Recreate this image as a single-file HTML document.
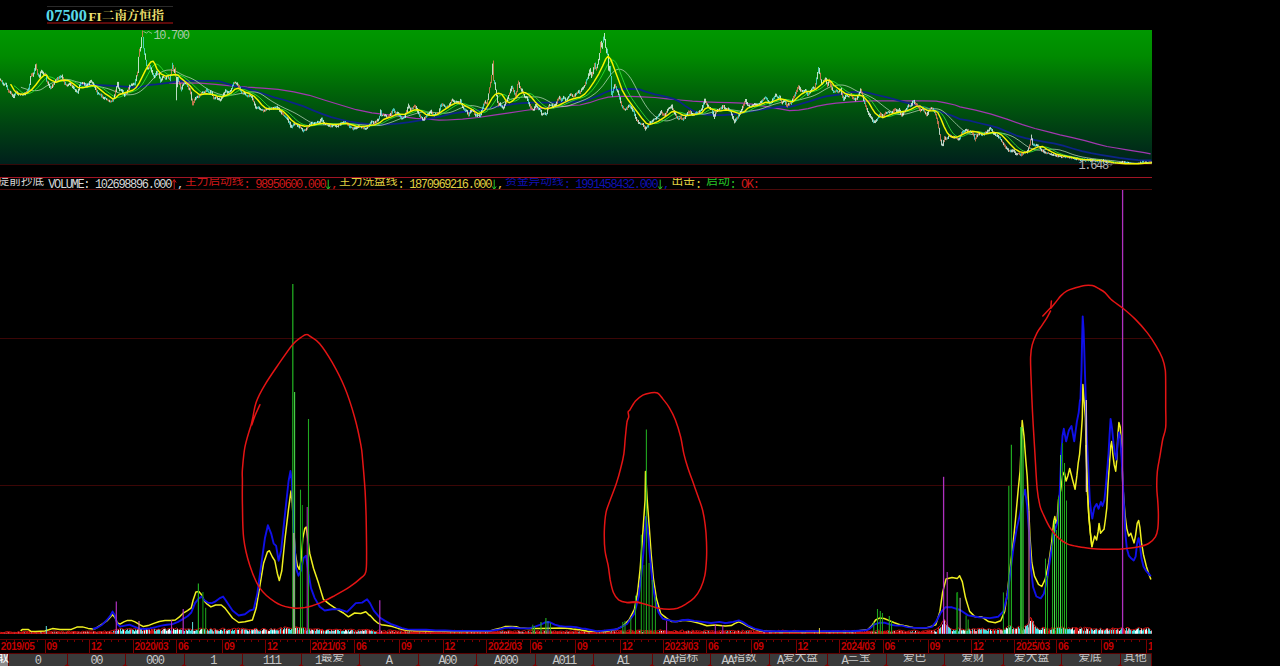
<!DOCTYPE html>
<html lang="zh"><head><meta charset="utf-8"><title>07500 FI二南方恒指</title>
<style>
html,body{margin:0;padding:0;background:#000}
body{width:1280px;height:666px;overflow:hidden;position:relative;font-family:"Liberation Sans",sans-serif;color:#c0c0c0}
.cj{display:inline-block;vertical-align:top;overflow:visible;white-space:nowrap;font-family:"Liberation Mono","Noto Sans CJK SC",monospace;font-size:11.7px;line-height:11.7px;letter-spacing:0;font-weight:normal}
#title{position:absolute;left:47px;top:6px;width:126px;height:18px;border-top:1px solid #2a2a2a;border-bottom:2px solid #5c0a0a;box-sizing:border-box;white-space:nowrap}
#title .code{position:absolute;left:-1px;top:-1px;font:bold 17px/20px "Liberation Serif",serif;color:#58d8e8;transform:scaleX(.965);transform-origin:0 0}
#title .fi{position:absolute;left:41.5px;top:2px;font:bold 13px/16px "Liberation Serif",serif;color:#f0e070;transform-origin:0 0}
#title .nm{position:absolute;left:55px;top:2.7px;color:#f0e070}
#title .nm .cj{font:bold 12.4px/12.6px "Liberation Serif","Noto Serif CJK SC",serif;width:62px;height:12.6px}
#kpanel{position:absolute;left:0;top:30px;width:1152px;height:134px;border-bottom:1px solid #340909;background:linear-gradient(#009800 0%,#008a00 20%,#006608 45%,#004412 70%,#002e18 88%,#00201c 100%)}
#chart{position:absolute;left:0;top:0}
#ind{position:absolute;left:0;top:177px;width:1152px;height:13px;box-sizing:border-box;border-top:1px solid #a01424;border-bottom:1px solid #4a0a0a;white-space:nowrap;overflow:hidden}
#ind .r{position:absolute;top:0;height:11px;font:12px/15px "Liberation Mono",monospace;letter-spacing:-1.35px}
#ind .cj{margin-top:-0.7px}
#ind .ar{display:inline-block;vertical-align:top;width:5.85px;height:11px;margin-top:0.5px}
.cw{color:#d8d8d8}.cr{color:#d01818}.cy{color:#e0d040}.cb{color:#1010b4}.cg{color:#28c828}
#axis{position:absolute;left:0;top:639px;width:1152px;height:15px;box-sizing:border-box;border-top:1px solid #5a0000;border-bottom:1px solid #5a0000;overflow:hidden}
#axis .m{position:absolute;top:0;height:14px;border-left:1px solid #7a0000;padding-left:1px;font:bold 10px/14px "Liberation Sans",sans-serif;color:#c40000;letter-spacing:-0.35px;white-space:nowrap}
#axis .t{position:absolute;top:0;width:1px;height:2px;background:#7a0000}
#tabs{position:absolute;left:0;top:654px;width:1152px;height:12px;background:#3a3a3a;overflow:hidden}
#tabs .tb{position:absolute;top:0;height:13px;text-align:center;font:12px/14px "Liberation Mono",monospace;letter-spacing:-1.35px;color:#c8c8c8;box-sizing:border-box;border-right:1px solid #6a0000;white-space:nowrap}
#tabs .tb .cj{margin-top:-0.8px;margin-right:1.35px}
#tabs .tb i{position:absolute;right:-4px;bottom:0;width:0;height:0;border-left:4px solid transparent;border-right:4px solid transparent;border-bottom:3px solid #800000}
#tabs .first{background:#8a8a8a;color:#fff}
#tabs .first .cj{font-size:12px;line-height:12px;width:12px;height:12px}
</style></head>
<body>
<div id="title"><span class="code">07500</span><span class="fi">FI</span><span class="nm"><span class="cj">二南方恒指</span></span></div>
<div id="kpanel"></div>
<svg id="chart" width="1280" height="666" viewBox="0 0 1280 666" fill="none">
<polyline points="168.8,83.1 184.4,82.8 200.0,83.1 215.6,84.4 231.2,85.9 246.9,87.2 262.5,88.1 278.1,89.4 293.8,91.9 309.4,95.3 325.0,100.3 340.6,105.0 356.2,109.7 371.9,112.8 384.4,114.4 392.2,115.3 400.0,116.4 415.6,118.3 431.2,119.5 439.1,120.2 446.9,120.0 462.5,119.1 478.1,117.5 493.8,115.2 509.4,112.8 525.0,110.5 540.6,108.4 556.2,107.3 571.9,105.3 580.0,105.0 589.4,102.7 598.8,99.5 608.1,97.2 617.5,96.4 630.0,96.4 642.5,96.9 655.0,97.5 667.5,98.8 680.0,100.0 692.5,101.1 705.0,101.9 717.5,102.3 730.0,102.7 742.5,103.1 751.9,104.2 761.2,105.8 770.6,107.3 780.0,108.9 789.4,110.6 798.8,110.2 808.1,108.6 817.5,106.2 826.9,104.4 836.2,103.1 845.6,102.3 855.0,101.6 864.4,101.1 873.8,100.8 886.2,100.8 898.8,100.8 911.2,100.8 923.8,100.8 936.2,101.1 945.6,102.8 955.0,105.0 960.0,106.9 975.6,110.1 991.2,114.1 1006.9,119.1 1022.5,124.6 1035.0,128.5 1047.5,131.6 1060.0,134.8 1072.5,137.6 1085.0,140.7 1097.5,144.1 1106.9,146.5 1116.2,148.0 1125.6,149.6 1135.0,151.2 1144.4,152.7 1150.6,153.8" stroke="#a038b0" stroke-width="1.2" />
<polyline points="79.7,84.4 93.8,85.0 109.4,85.6 125.0,86.6 134.4,87.5 140.6,87.0 148.4,85.0 156.2,84.4 164.1,83.4 171.9,82.3 179.7,81.2 187.5,80.8 200.0,80.8 209.4,80.9 218.8,81.2 228.1,84.1 237.5,86.7 246.9,88.3 256.2,91.4 265.6,94.5 275.0,97.7 284.4,100.0 293.8,103.1 303.1,106.2 312.5,110.2 321.9,113.8 331.2,117.2 340.6,119.5 350.0,121.6 359.4,123.1 368.8,124.2 378.1,124.7 387.5,124.4 393.8,123.9 400.0,123.4 409.4,122.2 420.3,120.3 431.2,118.4 442.2,116.2 451.6,113.6 462.5,112.0 473.4,110.9 482.8,109.7 493.8,107.3 503.1,105.8 512.5,104.2 521.9,103.1 531.2,102.7 540.6,102.7 550.0,102.7 559.4,102.2 568.8,101.9 578.1,101.6 580.0,101.9 586.2,100.3 592.5,98.0 598.8,95.6 605.0,92.5 611.2,90.2 619.1,89.1 630.0,88.9 639.4,89.4 645.6,91.7 655.0,94.4 664.4,96.4 673.8,98.8 680.0,101.9 686.2,106.6 692.5,110.5 698.8,113.6 705.0,114.7 714.4,115.2 723.8,115.2 733.1,114.4 742.5,112.8 751.9,111.2 761.2,109.7 770.6,108.1 780.0,106.6 787.8,107.0 795.6,105.5 803.4,103.1 811.2,100.8 819.1,98.1 826.9,96.1 833.1,95.3 839.4,94.5 845.6,93.0 851.9,92.2 858.1,91.9 864.4,92.2 870.6,93.4 876.9,95.0 886.2,97.2 895.6,99.7 905.0,102.3 914.4,104.7 923.8,107.0 933.1,109.4 942.5,112.5 951.9,115.6 960.0,119.1 969.4,120.7 978.8,123.0 988.1,125.1 997.5,127.7 1006.9,131.6 1016.2,135.5 1025.6,138.2 1035.0,140.2 1044.4,141.8 1053.8,143.3 1063.1,145.7 1072.5,148.5 1081.9,151.2 1091.2,153.2 1100.6,154.8 1110.0,156.3 1119.4,157.9 1128.8,159.1 1138.1,160.1 1151.4,160.5" stroke="#0c2488" stroke-width="1.8" stroke-linejoin="round"/>
<polyline points="20.9,87.2 22.9,88.0 24.9,88.6 26.9,89.3 28.9,89.8 30.9,90.2 32.9,90.5 34.9,90.7 36.9,90.6 38.9,90.3 40.9,89.6 42.9,88.5 44.9,87.1 46.9,85.8 48.9,84.6 50.9,83.5 52.9,82.6 54.9,81.7 56.9,81.0 58.9,80.4 60.9,79.9 62.9,79.5 64.9,79.4 66.9,79.4 68.9,79.6 70.9,80.0 72.9,80.7 74.9,81.3 76.9,81.8 78.9,82.3 80.9,82.8 82.9,83.2 84.9,83.6 86.9,84.1 88.9,84.5 90.9,84.9 92.9,85.3 94.9,85.7 96.9,86.1 98.9,86.5 100.9,87.0 102.9,87.4 104.9,87.9 106.9,88.4 108.9,89.0 110.9,89.7 112.9,90.5 114.9,91.4 116.9,92.2 118.9,92.9 120.9,93.5 122.9,94.1 124.9,94.5 126.9,94.8 128.9,94.8 130.9,94.7 132.9,94.5 134.9,94.0 136.9,93.3 138.9,92.3 140.9,91.0 142.9,89.4 144.9,87.6 146.9,85.7 148.9,83.5 150.9,81.3 152.9,79.0 154.9,76.8 156.9,75.1 158.9,73.6 160.9,72.4 162.9,71.4 164.9,70.6 166.9,70.2 168.9,70.0 170.9,70.0 172.9,70.4 174.9,70.9 176.9,71.8 178.9,72.8 180.9,74.0 182.9,75.0 184.9,75.9 186.9,76.7 188.9,77.4 190.9,78.2 192.9,79.2 194.9,80.3 196.9,81.5 198.9,82.9 200.9,84.4 202.9,85.9 204.9,87.3 206.9,88.5 208.9,89.7 210.9,90.7 212.9,91.7 214.9,92.5 216.9,93.3 218.9,94.0 220.9,94.5 222.9,94.9 224.9,95.1 226.9,95.1 228.9,95.1 230.9,95.1 232.9,94.9 234.9,94.6 236.9,94.2 238.9,93.8 240.9,93.4 242.9,93.0 244.9,92.7 246.9,92.4 248.9,92.1 250.9,91.9 252.9,91.9 254.9,92.0 256.9,92.4 258.9,93.0 260.9,93.9 262.9,95.1 264.9,96.5 266.9,97.9 268.9,99.3 270.9,100.6 272.9,101.9 274.9,103.0 276.9,104.2 278.9,105.3 280.9,106.3 282.9,107.3 284.9,108.3 286.9,109.2 288.9,110.1 290.9,111.0 292.9,112.0 294.9,113.0 296.9,114.1 298.9,115.3 300.9,116.5 302.9,117.7 304.9,119.0 306.9,120.2 308.9,121.4 310.9,122.4 312.9,123.2 314.9,123.9 316.9,124.4 318.9,124.7 320.9,124.8 322.9,124.8 324.9,124.8 326.9,124.7 328.9,124.6 330.9,124.4 332.9,124.3 334.9,124.2 336.9,124.1 338.9,124.0 340.9,123.9 342.9,123.9 344.9,123.8 346.9,123.8 348.9,123.9 350.9,124.0 352.9,124.1 354.9,124.2 356.9,124.4 358.9,124.6 360.9,124.7 362.9,124.9 364.9,125.0 366.9,125.2 368.9,125.3 370.9,125.4 372.9,125.5 374.9,125.6 376.9,125.6 378.9,125.5 380.9,125.3 382.9,124.9 384.9,124.3 386.9,123.7 388.9,123.1 390.9,122.4 392.9,121.7 394.9,120.9 396.9,120.1 398.9,119.3 400.9,118.5 402.9,117.7 404.9,117.0 406.9,116.3 408.9,115.7 410.9,115.1 412.9,114.5 414.9,113.9 416.9,113.3 418.9,112.8 420.9,112.4 422.9,112.2 424.9,112.1 426.9,112.1 428.9,112.2 430.9,112.3 432.9,112.4 434.9,112.5 436.9,112.7 438.9,112.9 440.9,113.1 442.9,113.2 444.9,113.2 446.9,113.0 448.9,112.7 450.9,112.2 452.9,111.5 454.9,110.7 456.9,109.8 458.9,108.9 460.9,108.0 462.9,107.3 464.9,106.6 466.9,106.1 468.9,105.8 470.9,105.6 472.9,105.7 474.9,106.0 476.9,106.4 478.9,107.0 480.9,107.7 482.9,108.3 484.9,108.9 486.9,109.2 488.9,109.2 490.9,109.0 492.9,108.4 494.9,107.5 496.9,106.4 498.9,105.3 500.9,104.0 502.9,102.8 504.9,101.7 506.9,100.8 508.9,100.0 510.9,99.3 512.9,98.7 514.9,98.2 516.9,97.8 518.9,97.5 520.9,97.2 522.9,97.1 524.9,97.0 526.9,97.0 528.9,97.0 530.9,97.0 532.9,96.9 534.9,96.9 536.9,96.9 538.9,97.2 540.9,97.7 542.9,98.4 544.9,99.3 546.9,100.4 548.9,101.5 550.9,102.7 552.9,103.8 554.9,104.7 556.9,105.5 558.9,106.1 560.9,106.4 562.9,106.5 564.9,106.4 566.9,106.1 568.9,105.6 570.9,104.9 572.9,104.2 574.9,103.5 576.9,102.7 578.9,102.0 580.9,101.2 582.9,100.4 584.9,99.6 586.9,98.6 588.9,97.6 590.9,96.4 592.9,95.0 594.9,93.6 596.9,91.9 598.9,90.0 600.9,87.9 602.9,85.6 604.9,82.9 606.9,80.0 608.9,77.1 610.9,74.5 612.9,72.3 614.9,70.6 616.9,69.6 618.9,69.2 620.9,69.4 622.9,70.2 624.9,71.6 626.9,73.4 628.9,75.8 630.9,78.6 632.9,82.0 634.9,85.8 636.9,89.8 638.9,93.7 640.9,97.4 642.9,100.9 644.9,104.2 646.9,107.2 648.9,109.8 650.9,112.2 652.9,114.3 654.9,116.1 656.9,117.6 658.9,118.8 660.9,119.8 662.9,120.4 664.9,120.8 666.9,120.9 668.9,120.6 670.9,120.1 672.9,119.3 674.9,118.4 676.9,117.5 678.9,116.7 680.9,115.9 682.9,115.4 684.9,114.9 686.9,114.5 688.9,114.2 690.9,114.0 692.9,113.9 694.9,113.9 696.9,113.9 698.9,114.0 700.9,114.1 702.9,114.2 704.9,114.0 706.9,113.6 708.9,113.1 710.9,112.6 712.9,112.1 714.9,111.7 716.9,111.4 718.9,111.1 720.9,110.8 722.9,110.5 724.9,110.2 726.9,110.0 728.9,109.8 730.9,109.8 732.9,110.0 734.9,110.3 736.9,110.6 738.9,110.9 740.9,111.2 742.9,111.4 744.9,111.5 746.9,111.4 748.9,111.2 750.9,110.9 752.9,110.7 754.9,110.3 756.9,110.0 758.9,109.6 760.9,109.0 762.9,108.4 764.9,107.7 766.9,106.8 768.9,106.1 770.9,105.3 772.9,104.7 774.9,104.1 776.9,103.5 778.9,103.0 780.9,102.4 782.9,101.9 784.9,101.5 786.9,101.2 788.9,101.0 790.9,100.8 792.9,100.8 794.9,100.6 796.9,100.3 798.9,99.9 800.9,99.5 802.9,98.9 804.9,98.4 806.9,97.8 808.9,97.3 810.9,96.7 812.9,96.0 814.9,95.2 816.9,94.2 818.9,93.2 820.9,92.0 822.9,90.8 824.9,89.6 826.9,88.5 828.9,87.5 830.9,86.6 832.9,85.9 834.9,85.5 836.9,85.2 838.9,85.0 840.9,85.0 842.9,85.1 844.9,85.5 846.9,86.1 848.9,86.9 850.9,87.8 852.9,88.9 854.9,90.0 856.9,91.1 858.9,92.1 860.9,92.9 862.9,93.6 864.9,94.3 866.9,95.1 868.9,96.0 870.9,97.0 872.9,98.1 874.9,99.4 876.9,100.8 878.9,102.4 880.9,104.0 882.9,105.6 884.9,107.2 886.9,108.7 888.9,110.1 890.9,111.5 892.9,112.6 894.9,113.5 896.9,114.1 898.9,114.5 900.9,114.6 902.9,114.5 904.9,114.2 906.9,113.8 908.9,113.3 910.9,112.7 912.9,112.1 914.9,111.5 916.9,110.9 918.9,110.3 920.9,109.8 922.9,109.4 924.9,109.1 926.9,108.9 928.9,108.8 930.9,108.8 932.9,108.8 934.9,108.8 936.9,108.9 938.9,109.3 940.9,110.0 942.9,111.2 944.9,112.7 946.9,114.6 948.9,116.6 950.9,118.7 952.9,120.7 954.9,122.7 956.9,124.7 958.9,126.6 960.9,128.4 962.9,130.1 964.9,131.7 966.9,133.0 968.9,133.8 970.9,134.3 972.9,134.5 974.9,134.4 976.9,134.1 978.9,133.8 980.9,133.5 982.9,133.3 984.9,133.1 986.9,132.9 988.9,132.8 990.9,132.7 992.9,132.7 994.9,132.7 996.9,132.8 998.9,132.9 1000.9,133.1 1002.9,133.4 1004.9,133.8 1006.9,134.4 1008.9,135.0 1010.9,135.8 1012.9,136.7 1014.9,137.8 1016.9,139.1 1018.9,140.4 1020.9,141.8 1022.9,143.3 1024.9,144.8 1026.9,146.1 1028.9,147.4 1030.9,148.4 1032.9,149.2 1034.9,149.7 1036.9,150.0 1038.9,150.1 1040.9,150.1 1042.9,149.9 1044.9,149.6 1046.9,149.4 1048.9,149.3 1050.9,149.2 1052.9,149.2 1054.9,149.3 1056.9,149.5 1058.9,149.8 1060.9,150.3 1062.9,150.9 1064.9,151.5 1066.9,152.2 1068.9,153.0 1070.9,153.8 1072.9,154.5 1074.9,155.1 1076.9,155.6 1078.9,156.2 1080.9,156.6 1082.9,157.1 1084.9,157.4 1086.9,157.8 1088.9,158.1 1090.9,158.4 1092.9,158.7 1094.9,158.9 1096.9,159.2 1098.9,159.4 1100.9,159.6 1102.9,159.8 1104.9,160.0 1106.9,160.2 1108.9,160.3 1110.9,160.5 1112.9,160.7 1114.9,160.9 1116.9,161.2 1118.9,161.4 1120.9,161.6 1122.9,161.9 1124.9,162.1 1126.9,162.4 1128.9,162.6 1130.9,162.8 1132.9,163.0 1134.9,163.2 1136.9,163.3 1138.9,163.4 1140.9,163.5 1142.9,163.5 1144.9,163.5 1146.9,163.5 1148.9,163.5 1150.9,163.4" stroke="#b8d8b8" stroke-width="0.9" opacity=".85"/>
<polyline points="13.9,85.7 15.9,87.1 17.9,88.8 19.9,90.6 21.9,92.4 23.9,93.4 25.9,93.8 27.9,93.7 29.9,93.2 31.9,92.3 33.9,91.0 35.9,89.4 37.9,87.4 39.9,85.1 41.9,82.7 43.9,80.3 45.9,78.3 47.9,77.1 49.9,76.9 51.9,77.4 53.9,78.4 55.9,79.8 57.9,80.8 59.9,81.3 61.9,81.3 63.9,81.1 65.9,80.8 67.9,80.5 69.9,80.5 71.9,80.9 73.9,81.7 75.9,82.7 77.9,84.0 79.9,85.3 81.9,86.3 83.9,87.1 85.9,87.4 87.9,87.3 89.9,87.0 91.9,86.6 93.9,86.2 95.9,86.0 97.9,86.2 99.9,86.7 101.9,87.7 103.9,89.0 105.9,90.6 107.9,92.1 109.9,93.6 111.9,95.1 113.9,96.4 115.9,97.2 117.9,97.4 119.9,97.0 121.9,96.2 123.9,95.2 125.9,94.1 127.9,93.3 129.9,92.6 131.9,91.9 133.9,91.2 135.9,90.3 137.9,89.1 139.9,87.3 141.9,84.8 143.9,81.8 145.9,78.2 147.9,74.5 149.9,70.8 151.9,67.5 153.9,65.0 155.9,64.0 157.9,64.5 159.9,66.1 161.9,68.5 163.9,71.2 165.9,73.3 167.9,74.5 169.9,75.2 171.9,75.5 173.9,75.4 175.9,75.2 177.9,75.0 179.9,75.3 181.9,76.0 183.9,77.0 185.9,78.5 187.9,80.2 189.9,81.9 191.9,83.7 193.9,85.6 195.9,87.5 197.9,89.4 199.9,91.2 201.9,92.7 203.9,93.6 205.9,94.1 207.9,94.2 209.9,94.2 211.9,94.1 213.9,94.2 215.9,94.6 217.9,95.0 219.9,95.5 221.9,95.9 223.9,96.2 225.9,96.3 227.9,96.0 229.9,95.5 231.9,94.7 233.9,93.6 235.9,92.3 237.9,91.0 239.9,90.0 241.9,89.4 243.9,89.5 245.9,90.1 247.9,91.0 249.9,91.9 251.9,92.9 253.9,93.8 255.9,94.9 257.9,96.3 259.9,97.9 261.9,99.9 263.9,101.9 265.9,104.0 267.9,105.8 269.9,107.1 271.9,108.1 273.9,108.6 275.9,108.8 277.9,108.9 279.9,109.0 281.9,109.3 283.9,109.9 285.9,110.8 287.9,112.1 289.9,113.8 291.9,115.7 293.9,117.7 295.9,119.6 297.9,121.3 299.9,122.7 301.9,123.8 303.9,124.6 305.9,125.2 307.9,125.6 309.9,125.8 311.9,125.8 313.9,125.6 315.9,125.3 317.9,124.9 319.9,124.4 321.9,124.1 323.9,123.7 325.9,123.5 327.9,123.5 329.9,123.5 331.9,123.7 333.9,123.9 335.9,124.1 337.9,124.2 339.9,124.3 341.9,124.2 343.9,124.1 345.9,123.9 347.9,123.8 349.9,123.8 351.9,123.9 353.9,124.2 355.9,124.7 357.9,125.3 359.9,125.8 361.9,126.1 363.9,126.3 365.9,126.4 367.9,126.3 369.9,126.1 371.9,125.8 373.9,125.5 375.9,125.2 377.9,124.7 379.9,124.2 381.9,123.4 383.9,122.4 385.9,121.2 387.9,120.1 389.9,119.0 391.9,118.2 393.9,117.4 395.9,116.6 397.9,115.9 399.9,115.2 401.9,114.7 403.9,114.4 405.9,114.2 407.9,113.9 409.9,113.5 411.9,112.9 413.9,112.1 415.9,111.3 417.9,110.6 419.9,110.3 421.9,110.3 423.9,110.7 425.9,111.5 427.9,112.5 429.9,113.5 431.9,114.3 433.9,115.0 435.9,115.1 437.9,115.1 439.9,114.7 441.9,113.9 443.9,112.9 445.9,111.7 447.9,110.4 449.9,109.1 451.9,107.8 453.9,106.5 455.9,105.3 457.9,104.4 459.9,103.8 461.9,103.5 463.9,103.7 465.9,104.2 467.9,105.0 469.9,105.9 471.9,107.0 473.9,108.2 475.9,109.4 477.9,110.6 479.9,111.7 481.9,112.3 483.9,112.4 485.9,111.8 487.9,110.4 489.9,108.3 491.9,105.7 493.9,102.8 495.9,99.8 497.9,97.3 499.9,95.5 501.9,94.5 503.9,94.5 505.9,95.5 507.9,97.2 509.9,98.9 511.9,100.4 513.9,101.1 515.9,100.8 517.9,99.7 519.9,98.0 521.9,96.3 523.9,94.8 525.9,93.7 527.9,93.3 529.9,93.5 531.9,94.4 533.9,95.8 535.9,97.7 537.9,99.8 539.9,101.9 541.9,103.8 543.9,105.5 545.9,106.8 547.9,107.7 549.9,108.2 551.9,108.3 553.9,108.0 555.9,107.5 557.9,107.0 559.9,106.3 561.9,105.6 563.9,104.8 565.9,103.9 567.9,103.0 569.9,102.0 571.9,101.1 573.9,100.2 575.9,99.5 577.9,98.8 579.9,98.3 581.9,97.6 583.9,96.9 585.9,95.9 587.9,94.5 589.9,92.7 591.9,90.6 593.9,88.1 595.9,85.3 597.9,82.3 599.9,79.1 601.9,75.7 603.9,72.0 605.9,68.1 607.9,64.3 609.9,61.4 611.9,60.0 613.9,60.4 615.9,62.7 617.9,66.7 619.9,71.7 621.9,77.1 623.9,82.3 625.9,87.2 627.9,91.5 629.9,95.3 631.9,98.6 633.9,101.5 635.9,104.3 637.9,107.0 639.9,109.6 641.9,112.3 643.9,114.9 645.9,117.5 647.9,119.8 649.9,121.7 651.9,122.9 653.9,123.6 655.9,123.6 657.9,123.2 659.9,122.4 661.9,121.5 663.9,120.4 665.9,119.2 667.9,117.9 669.9,116.5 671.9,115.1 673.9,113.8 675.9,112.8 677.9,112.3 679.9,112.2 681.9,112.6 683.9,113.4 685.9,114.1 687.9,114.7 689.9,115.1 691.9,115.3 693.9,115.1 695.9,114.9 697.9,114.6 699.9,114.2 701.9,113.8 703.9,113.1 705.9,112.0 707.9,110.7 709.9,109.6 711.9,108.8 713.9,108.6 715.9,108.9 717.9,109.5 719.9,110.1 721.9,110.4 723.9,110.6 725.9,110.5 727.9,110.5 729.9,110.4 731.9,110.4 733.9,110.7 735.9,111.1 737.9,111.6 739.9,112.2 741.9,112.6 743.9,112.8 745.9,112.4 747.9,111.6 749.9,110.4 751.9,109.2 753.9,108.0 755.9,107.0 757.9,106.4 759.9,105.9 761.9,105.3 763.9,104.7 765.9,104.0 767.9,103.4 769.9,102.9 771.9,102.5 773.9,102.1 775.9,101.7 777.9,101.2 779.9,100.5 781.9,99.9 783.9,99.5 785.9,99.4 787.9,99.6 789.9,100.1 791.9,100.7 793.9,101.0 795.9,100.9 797.9,100.2 799.9,99.1 801.9,97.6 803.9,96.0 805.9,94.5 807.9,93.2 809.9,92.4 811.9,91.8 813.9,91.3 815.9,90.7 817.9,90.0 819.9,89.0 821.9,87.6 823.9,86.0 825.9,84.3 827.9,82.8 829.9,81.7 831.9,81.2 833.9,81.7 835.9,82.8 837.9,84.3 839.9,86.1 841.9,87.8 843.9,89.3 845.9,90.8 847.9,92.0 849.9,93.1 851.9,94.0 853.9,94.6 855.9,95.0 857.9,95.3 859.9,95.4 861.9,95.5 863.9,95.8 865.9,96.4 867.9,97.5 869.9,99.2 871.9,101.5 873.9,104.3 875.9,107.2 877.9,110.0 879.9,112.5 881.9,114.4 883.9,115.8 885.9,116.5 887.9,116.6 889.9,116.3 891.9,115.8 893.9,115.0 895.9,114.3 897.9,113.6 899.9,113.0 901.9,112.6 903.9,112.2 905.9,111.8 907.9,111.4 909.9,111.0 911.9,110.4 913.9,109.7 915.9,108.8 917.9,108.0 919.9,107.2 921.9,106.8 923.9,106.9 925.9,107.4 927.9,108.2 929.9,109.2 931.9,109.9 933.9,110.4 935.9,110.7 937.9,111.1 939.9,112.2 941.9,114.0 943.9,116.8 945.9,120.5 947.9,124.6 949.9,128.5 951.9,131.8 953.9,134.3 955.9,135.9 957.9,136.7 959.9,136.8 961.9,136.5 963.9,135.9 965.9,135.0 967.9,134.1 969.9,133.2 971.9,132.5 973.9,131.9 975.9,131.7 977.9,131.7 979.9,131.9 981.9,132.3 983.9,132.9 985.9,133.3 987.9,133.6 989.9,133.7 991.9,133.6 993.9,133.2 995.9,132.9 997.9,132.8 999.9,132.9 1001.9,133.4 1003.9,134.2 1005.9,135.5 1007.9,137.1 1009.9,139.0 1011.9,141.2 1013.9,143.3 1015.9,145.4 1017.9,147.3 1019.9,148.9 1021.9,150.2 1023.9,151.2 1025.9,151.8 1027.9,152.1 1029.9,152.0 1031.9,151.6 1033.9,150.9 1035.9,150.0 1037.9,149.1 1039.9,148.2 1041.9,147.5 1043.9,147.1 1045.9,147.1 1047.9,147.6 1049.9,148.4 1051.9,149.4 1053.9,150.6 1055.9,151.7 1057.9,152.7 1059.9,153.5 1061.9,154.2 1063.9,154.9 1065.9,155.4 1067.9,155.8 1069.9,156.2 1071.9,156.6 1073.9,157.0 1075.9,157.4 1077.9,157.8 1079.9,158.2 1081.9,158.5 1083.9,158.9 1085.9,159.2 1087.9,159.4 1089.9,159.6 1091.9,159.7 1093.9,159.8 1095.9,159.9 1097.9,160.0 1099.9,160.2 1101.9,160.3 1103.9,160.5 1105.9,160.7 1107.9,160.9 1109.9,161.2 1111.9,161.5 1113.9,161.8 1115.9,162.2 1117.9,162.5 1119.9,162.8 1121.9,163.0 1123.9,163.2 1125.9,163.3 1127.9,163.5 1129.9,163.6 1131.9,163.6 1133.9,163.7 1135.9,163.7 1137.9,163.7 1139.9,163.6 1141.9,163.6 1143.9,163.5 1145.9,163.4 1147.9,163.3 1149.9,163.2" stroke="#30e030" stroke-width="0.9" />
<path d="M0.5 78.5V80.7M3.5 82.5V85.6M4.5 83.7V85.7M6.5 82.8V87.2M10.5 90.8V93.8M12.5 93.7V96.8M13.5 94.5V98.0M14.5 93.7V98.1M17.5 91.3V94.8M18.5 92.6V95.7M20.5 93.9V95.6M22.5 93.8V95.6M23.5 93.3V95.5M24.5 92.5V95.2M25.5 92.4V95.3M30.5 76.0V85.0M33.5 72.5V76.9M35.5 64.3V70.8M39.5 74.6V77.8M40.5 71.4V77.7M41.5 69.8V73.1M42.5 70.5V73.7M43.5 71.7V75.4M44.5 73.4V74.8M48.5 81.5V85.5M49.5 83.9V88.0M52.5 84.3V88.0M54.5 81.8V84.8M55.5 79.5V83.0M61.5 75.7V77.5M62.5 74.5V78.9M67.5 84.5V86.6M68.5 83.6V86.2M69.5 82.7V85.0M70.5 82.6V85.9M72.5 85.2V88.1M73.5 85.7V89.1M75.5 89.0V91.9M76.5 89.5V92.4M78.5 88.7V93.8M79.5 84.6V90.5M82.5 82.0V84.3M84.5 82.3V85.7M86.5 84.5V87.2M87.5 83.5V87.3M89.5 81.1V85.2M90.5 80.1V83.0M91.5 79.8V82.6M92.5 81.5V83.8M93.5 82.2V85.5M95.5 85.6V90.0M98.5 92.1V94.4M103.5 96.6V99.1M104.5 97.0V99.7M106.5 98.1V100.2M109.5 99.8V102.2M114.5 94.3V99.3M116.5 86.2V92.0M117.5 81.9V87.4M118.5 81.9V88.8M119.5 87.6V91.3M121.5 89.0V91.4M122.5 89.3V93.2M124.5 93.3V96.8M127.5 89.8V93.5M129.5 84.7V89.7M131.5 83.5V85.9M132.5 83.5V85.9M133.5 82.8V85.3M136.5 75.2V81.2M138.5 56.8V73.0M140.5 47.0V51.5M141.5 37.1V48.1M145.5 53.4V59.8M147.5 65.6V69.5M148.5 67.3V69.5M151.5 67.4V72.5M152.5 70.0V74.7M154.5 75.1V78.3M156.5 70.8V75.5M159.5 73.3V78.6M161.5 78.5V81.7M162.5 76.2V80.4M163.5 75.7V77.8M166.5 75.8V79.6M174.5 68.9V73.1M176.5 76.7V100.3M177.5 76.9V87.2M182.5 84.5V89.6M183.5 83.4V85.8M185.5 82.3V84.2M189.5 87.6V90.3M191.5 91.7V100.5M195.5 97.0V100.4M197.5 95.7V98.0M202.5 91.4V93.3M204.5 91.4V93.4M210.5 90.4V93.8M212.5 91.5V96.0M215.5 96.7V99.3M217.5 96.1V99.9M218.5 98.0V100.2M219.5 97.7V100.6M220.5 98.8V101.5M221.5 96.6V100.6M222.5 95.6V98.7M223.5 92.7V97.4M224.5 91.8V95.5M225.5 89.3V92.8M227.5 90.7V93.8M228.5 91.1V93.4M230.5 90.0V92.2M231.5 88.1V91.5M235.5 81.7V83.4M236.5 82.5V84.5M237.5 82.4V85.6M244.5 91.5V94.5M245.5 92.1V95.4M250.5 94.6V96.5M251.5 95.6V97.8M252.5 95.3V100.4M254.5 101.4V105.5M255.5 103.7V108.5M256.5 106.4V109.2M259.5 106.7V109.7M260.5 108.1V110.3M261.5 109.1V110.6M264.5 109.6V111.7M266.5 107.7V110.5M267.5 108.6V109.8M268.5 107.7V109.9M269.5 107.5V110.4M270.5 108.2V109.7M273.5 107.0V109.5M275.5 106.6V107.9M277.5 105.7V109.2M278.5 107.1V108.7M279.5 107.5V111.8M280.5 109.6V112.5M281.5 110.9V114.4M287.5 117.3V120.2M288.5 118.4V122.8M290.5 121.7V127.6M291.5 124.7V127.9M294.5 123.3V125.5M297.5 124.0V126.9M299.5 125.0V128.4M301.5 127.3V129.3M302.5 128.0V131.4M306.5 127.5V130.7M309.5 123.7V126.9M311.5 121.8V124.9M314.5 122.1V124.9M317.5 120.9V123.1M319.5 121.3V123.6M320.5 118.9V122.9M321.5 117.7V121.6M323.5 119.9V124.4M324.5 121.9V124.4M325.5 123.3V124.9M328.5 124.9V126.7M329.5 124.5V126.8M332.5 124.8V127.3M333.5 124.2V126.2M335.5 124.4V126.9M336.5 124.4V127.7M337.5 125.7V127.0M338.5 124.7V127.5M340.5 122.6V125.7M342.5 122.1V123.6M343.5 121.3V124.0M354.5 127.2V129.5M355.5 127.1V129.3M356.5 126.7V129.3M357.5 126.6V128.7M358.5 125.5V128.0M361.5 126.4V128.4M365.5 127.7V129.8M366.5 127.5V129.7M367.5 126.8V128.9M371.5 120.5V123.7M373.5 121.0V124.1M375.5 120.8V123.3M377.5 118.8V121.7M378.5 118.6V121.3M380.5 109.4V116.1M382.5 114.8V116.2M384.5 114.5V116.4M385.5 114.1V116.4M386.5 114.8V117.7M390.5 112.9V116.0M397.5 111.7V114.4M398.5 112.0V115.3M402.5 118.1V119.4M405.5 112.8V117.8M407.5 106.8V112.9M408.5 103.6V108.7M409.5 105.4V108.4M410.5 107.5V111.2M416.5 106.0V110.4M417.5 107.9V112.7M418.5 110.3V114.3M422.5 117.0V120.5M423.5 118.9V120.8M424.5 117.1V120.7M428.5 113.1V115.7M429.5 111.6V115.1M430.5 110.4V113.3M431.5 109.7V114.0M435.5 113.0V115.3M439.5 108.3V113.3M444.5 104.5V106.8M449.5 103.4V106.4M450.5 102.0V105.4M452.5 98.6V101.3M453.5 99.5V102.1M454.5 100.3V103.7M456.5 100.7V103.4M457.5 101.0V103.2M458.5 101.1V103.8M460.5 98.9V103.1M462.5 103.1V108.0M463.5 106.4V109.5M466.5 109.5V111.6M467.5 110.1V114.5M470.5 109.8V113.6M471.5 109.4V112.5M472.5 109.4V111.4M473.5 109.4V112.0M475.5 113.4V116.6M477.5 113.6V117.1M478.5 114.6V115.9M479.5 114.1V116.9M481.5 110.1V115.3M485.5 100.3V103.6M488.5 93.4V100.1M492.5 63.6V74.9M495.5 82.3V90.0M496.5 89.5V96.4M497.5 95.0V102.9M499.5 102.9V105.6M500.5 102.2V106.3M502.5 105.5V108.4M503.5 106.6V109.6M504.5 104.2V108.4M505.5 101.9V105.6M507.5 97.4V102.0M508.5 95.0V99.0M510.5 88.6V93.3M511.5 85.9V91.4M519.5 82.2V88.0M521.5 88.3V91.6M522.5 88.7V92.2M524.5 94.1V97.5M525.5 96.1V98.3M526.5 96.1V98.3M527.5 96.6V101.0M529.5 102.2V106.5M533.5 109.0V110.8M534.5 106.3V110.7M535.5 104.1V108.2M536.5 103.8V107.3M537.5 105.5V108.1M539.5 107.7V110.1M541.5 109.9V115.4M542.5 113.2V115.6M543.5 112.8V114.8M545.5 112.2V115.1M547.5 107.5V114.2M549.5 104.0V106.6M550.5 104.7V105.8M552.5 104.1V107.5M553.5 105.4V108.1M554.5 104.6V107.0M555.5 103.7V106.6M556.5 101.6V105.8M559.5 95.8V99.3M563.5 95.9V99.3M565.5 97.4V101.1M567.5 97.5V100.9M568.5 96.1V98.6M570.5 93.5V95.9M572.5 94.2V96.9M575.5 93.2V96.6M578.5 90.2V93.2M581.5 88.4V91.9M582.5 87.2V90.3M583.5 86.4V89.5M584.5 85.0V87.7M588.5 73.3V78.9M589.5 69.5V75.9M590.5 68.1V74.7M591.5 71.9V78.0M593.5 67.2V74.2M597.5 63.9V68.3M598.5 58.9V64.6M599.5 53.0V60.2M601.5 40.9V47.4M602.5 42.7V48.8M604.5 33.0V40.3M605.5 39.0V47.9M606.5 47.4V53.3M608.5 53.8V70.6M609.5 65.9V71.5M614.5 84.3V88.7M617.5 89.3V92.4M618.5 90.5V95.3M620.5 97.2V103.2M625.5 108.7V110.7M628.5 104.8V107.9M631.5 106.1V109.3M632.5 107.3V111.5M635.5 113.8V118.8M636.5 117.0V121.0M638.5 120.0V123.9M639.5 122.0V124.0M642.5 123.4V125.0M643.5 123.0V126.9M645.5 126.4V130.6M646.5 126.7V129.2M650.5 121.1V124.1M652.5 119.8V122.5M653.5 118.7V121.6M655.5 118.0V119.5M656.5 116.7V119.7M659.5 113.3V116.3M660.5 111.2V115.1M661.5 110.0V113.6M665.5 112.9V116.1M667.5 108.9V112.7M668.5 107.7V110.6M669.5 107.0V109.0M670.5 106.4V108.6M671.5 104.7V108.5M672.5 104.4V110.1M674.5 110.2V114.4M675.5 112.2V115.6M685.5 115.5V119.0M687.5 112.0V115.0M691.5 111.2V114.9M692.5 113.0V115.7M693.5 113.6V115.7M699.5 110.2V113.2M701.5 108.5V111.0M702.5 105.0V110.4M704.5 98.7V104.4M705.5 98.7V102.8M707.5 103.4V106.9M708.5 104.7V107.5M710.5 107.0V109.9M713.5 111.4V116.8M714.5 114.2V119.0M715.5 112.3V116.7M717.5 109.0V112.0M719.5 108.2V110.0M722.5 105.1V109.1M724.5 105.0V109.1M725.5 107.3V110.2M726.5 108.0V110.7M728.5 107.5V111.1M731.5 111.5V115.5M732.5 113.7V118.8M733.5 116.0V120.4M734.5 119.4V123.4M735.5 118.5V122.5M739.5 112.7V116.5M740.5 111.0V114.7M741.5 108.9V111.9M742.5 105.8V110.3M745.5 99.0V102.4M746.5 99.0V104.3M747.5 102.0V105.9M748.5 104.7V106.3M749.5 104.6V107.9M752.5 104.5V107.2M753.5 104.2V106.3M754.5 103.0V105.2M755.5 103.2V105.7M756.5 103.4V105.8M757.5 103.5V105.5M759.5 102.8V105.1M760.5 101.1V103.6M761.5 100.4V103.3M764.5 97.5V99.5M768.5 100.1V102.6M772.5 98.4V103.0M775.5 93.6V97.1M776.5 93.8V96.7M778.5 96.7V98.8M780.5 95.7V100.4M782.5 101.6V104.4M783.5 100.3V102.7M784.5 99.3V101.7M788.5 102.8V105.6M792.5 98.5V102.7M799.5 85.7V90.2M800.5 87.2V91.7M802.5 90.0V92.3M804.5 90.0V92.0M805.5 89.0V91.4M810.5 90.1V93.4M811.5 88.6V91.9M813.5 86.4V88.8M814.5 87.3V88.8M817.5 72.0V79.2M819.5 68.0V74.1M821.5 79.3V84.6M823.5 80.3V83.5M825.5 77.5V80.2M826.5 77.8V84.2M828.5 81.4V85.8M832.5 87.2V90.8M839.5 88.9V92.3M840.5 88.7V91.3M841.5 87.8V94.8M844.5 96.9V100.5M845.5 95.0V98.9M847.5 94.5V96.7M848.5 95.9V97.3M855.5 97.7V101.3M857.5 96.0V99.8M859.5 91.7V95.8M860.5 88.4V93.0M863.5 95.1V101.1M867.5 108.0V112.2M868.5 111.0V115.0M869.5 112.7V116.8M870.5 113.9V117.8M871.5 116.2V119.3M872.5 117.3V121.9M874.5 120.4V123.0M875.5 120.2V123.1M876.5 119.0V121.9M882.5 114.0V118.2M886.5 111.9V113.9M888.5 111.2V112.6M889.5 111.4V113.5M890.5 111.4V112.5M892.5 110.8V113.2M896.5 108.9V112.5M897.5 109.5V113.1M898.5 109.5V112.0M899.5 108.0V112.2M900.5 109.8V114.7M902.5 112.7V116.5M903.5 112.2V115.5M905.5 109.4V112.2M906.5 107.9V110.5M908.5 104.2V107.5M911.5 102.9V106.6M912.5 100.7V105.8M914.5 99.9V104.2M921.5 109.1V111.1M925.5 111.6V114.4M927.5 111.8V116.1M928.5 110.1V114.9M931.5 107.2V108.9M939.5 127.8V134.8M941.5 139.6V145.5M942.5 143.6V146.1M943.5 140.1V146.1M945.5 136.6V139.9M948.5 135.6V139.0M952.5 136.2V138.1M954.5 136.1V138.5M956.5 137.4V138.5M958.5 138.2V140.5M959.5 137.6V140.3M965.5 129.0V131.6M966.5 128.8V130.9M967.5 129.4V131.8M969.5 130.8V132.6M971.5 131.6V133.0M977.5 134.3V137.2M979.5 132.4V135.3M981.5 132.7V135.6M986.5 131.5V134.1M987.5 129.7V132.9M988.5 129.6V131.7M989.5 127.6V131.5M990.5 127.1V129.6M992.5 129.1V133.1M993.5 131.5V134.7M994.5 131.8V135.0M995.5 133.0V136.0M997.5 134.2V137.0M998.5 135.0V138.4M1001.5 139.0V141.7M1003.5 142.2V145.2M1006.5 146.3V149.2M1007.5 147.7V150.3M1008.5 148.3V151.9M1011.5 149.6V152.3M1012.5 149.3V152.3M1013.5 149.5V151.7M1014.5 149.5V152.9M1015.5 151.3V155.0M1016.5 152.9V155.4M1017.5 153.2V155.2M1026.5 151.4V152.8M1027.5 149.8V153.5M1028.5 147.6V151.1M1031.5 134.6V140.3M1032.5 138.3V145.2M1036.5 143.9V146.3M1037.5 144.3V146.6M1040.5 147.0V149.6M1041.5 148.6V151.5M1043.5 150.0V152.6M1044.5 150.6V153.4M1045.5 151.4V153.6M1049.5 153.1V154.4M1050.5 153.4V155.0M1051.5 153.2V155.4M1052.5 154.0V155.8M1053.5 153.6V156.0M1054.5 154.6V155.7M1055.5 154.3V156.4M1056.5 154.3V156.9M1058.5 154.8V157.3M1059.5 155.5V156.9M1060.5 155.2V156.9M1061.5 156.1V158.1M1063.5 155.9V157.3M1064.5 155.3V157.3M1066.5 155.9V157.4M1069.5 156.3V158.5M1073.5 157.0V159.0M1076.5 157.8V160.2M1077.5 157.7V159.5M1079.5 159.1V160.3M1080.5 159.1V161.2M1082.5 158.8V160.8M1084.5 158.8V160.8M1090.5 158.7V161.8M1091.5 159.6V161.8M1092.5 159.2V161.1M1098.5 160.1V161.3M1099.5 160.3V161.6M1101.5 159.8V161.9M1103.5 159.3V162.6M1104.5 160.4V162.0M1106.5 160.5V163.1M1108.5 160.9V162.9M1113.5 161.8V163.5M1115.5 162.4V163.5M1116.5 163.2V163.5M1119.5 162.3V163.5M1120.5 162.1V163.5M1121.5 161.9V163.5M1122.5 160.9V163.1M1124.5 161.2V162.9M1128.5 161.9V163.5M1131.5 163.4V163.5M1132.5 163.1V163.5M1133.5 163.4V163.5M1135.5 163.2V163.5M1138.5 162.6V163.5M1140.5 161.5V163.5M1145.5 161.4V163.2M1146.5 161.5V163.5M1147.5 162.1V163.5M1151.5 161.5V163.5" stroke="#f0fff8" stroke-width="1" opacity=".78"/><path d="M2.5 80.2V84.4M5.5 82.6V84.8M7.5 85.1V90.0M15.5 91.9V95.6M27.5 90.0V92.5M28.5 87.7V91.3M29.5 83.7V89.3M34.5 68.1V74.2M38.5 73.3V76.5M46.5 73.8V81.7M50.5 85.7V89.3M57.5 77.0V80.0M59.5 75.9V78.8M60.5 75.2V78.4M65.5 81.7V85.1M74.5 86.6V89.9M77.5 90.8V93.2M80.5 82.0V86.2M81.5 82.8V84.2M85.5 83.2V87.0M88.5 82.7V85.5M94.5 83.6V87.9M97.5 90.1V94.9M99.5 93.1V95.2M101.5 93.7V97.5M105.5 96.7V99.1M111.5 100.5V102.3M113.5 98.2V101.6M120.5 88.6V91.0M123.5 90.1V94.3M125.5 92.7V96.3M130.5 84.9V87.3M134.5 82.7V85.3M135.5 78.9V85.4M143.5 36.9V48.4M144.5 48.1V54.9M146.5 59.8V66.2M150.5 65.2V69.2M153.5 73.0V76.7M155.5 73.0V77.6M157.5 70.8V74.5M160.5 76.8V82.7M165.5 77.4V79.7M168.5 74.8V78.9M170.5 74.3V81.2M172.5 62.8V69.2M178.5 77.0V82.1M181.5 86.7V91.4M184.5 82.3V84.6M187.5 83.5V87.0M196.5 96.3V99.4M199.5 94.7V97.8M203.5 91.4V93.6M206.5 88.3V92.1M207.5 88.8V91.8M208.5 90.4V92.9M209.5 91.7V94.3M211.5 90.6V93.5M214.5 97.3V99.4M226.5 89.7V92.5M229.5 90.9V93.8M232.5 84.7V89.1M233.5 82.3V86.0M240.5 86.7V91.5M241.5 89.6V93.8M243.5 92.7V94.6M246.5 94.6V96.4M247.5 95.0V97.3M249.5 94.1V97.2M257.5 106.8V108.8M258.5 106.2V108.9M262.5 108.9V111.0M271.5 107.2V109.9M274.5 106.6V108.7M276.5 106.1V108.2M284.5 114.7V116.9M285.5 115.6V117.9M286.5 116.5V119.1M289.5 120.9V124.6M292.5 125.2V128.3M293.5 123.3V126.5M296.5 122.9V125.1M298.5 124.3V127.5M303.5 129.5V132.4M304.5 129.2V131.2M310.5 123.0V125.1M312.5 121.7V123.9M313.5 122.6V123.8M315.5 121.9V124.7M316.5 122.2V123.6M318.5 120.9V123.8M322.5 117.5V122.1M327.5 124.4V125.9M331.5 125.0V127.3M334.5 123.9V126.2M341.5 121.9V125.4M344.5 121.3V123.5M345.5 121.0V123.7M349.5 124.4V128.1M350.5 125.5V128.3M351.5 126.4V128.1M353.5 127.2V130.4M360.5 126.0V127.3M364.5 126.5V129.5M369.5 123.7V127.1M370.5 121.8V125.1M372.5 120.7V122.5M379.5 115.7V119.5M381.5 110.2V116.5M392.5 109.4V113.6M393.5 108.2V111.1M394.5 108.7V113.0M396.5 112.2V113.9M399.5 112.9V116.5M400.5 114.6V117.8M401.5 116.3V119.6M403.5 116.8V119.1M404.5 115.5V118.3M412.5 107.4V109.5M419.5 113.2V116.8M421.5 116.1V118.0M426.5 114.8V117.7M427.5 113.0V116.5M433.5 113.6V115.8M434.5 114.0V116.5M436.5 113.4V115.3M440.5 104.6V110.6M441.5 103.6V107.0M443.5 103.7V106.0M445.5 105.7V108.4M447.5 105.5V107.9M455.5 100.8V103.7M461.5 99.5V105.4M464.5 108.2V110.8M465.5 108.6V112.0M469.5 112.2V116.3M476.5 114.0V116.8M480.5 113.0V117.2M482.5 106.7V111.5M483.5 103.6V108.5M494.5 80.1V84.2M501.5 104.4V107.5M512.5 85.7V89.1M514.5 90.0V94.7M528.5 98.7V104.2M538.5 106.7V110.2M540.5 108.9V111.9M544.5 112.5V114.6M546.5 113.0V115.6M551.5 104.3V106.3M561.5 98.3V101.9M562.5 97.8V101.1M564.5 96.5V99.1M566.5 98.8V100.8M569.5 94.2V97.4M576.5 92.5V95.2M579.5 89.8V93.9M586.5 79.2V84.3M587.5 77.4V80.4M595.5 62.6V69.2M603.5 36.6V42.7M607.5 48.8V55.2M610.5 65.9V76.0M611.5 76.0V95.0M612.5 91.0V96.9M613.5 86.9V92.8M616.5 86.2V90.6M619.5 93.8V99.6M622.5 105.0V108.3M626.5 107.3V109.9M629.5 104.4V107.1M630.5 104.6V108.4M633.5 108.8V112.1M634.5 110.5V116.1M640.5 122.7V124.9M647.5 125.2V127.7M648.5 124.0V127.6M651.5 120.7V123.2M654.5 118.3V120.2M657.5 116.2V118.6M658.5 114.3V117.2M677.5 116.2V119.1M679.5 117.6V119.8M683.5 117.6V120.9M686.5 113.5V117.1M695.5 112.3V114.7M696.5 111.4V114.8M697.5 111.7V114.1M700.5 109.9V112.7M703.5 102.2V107.9M712.5 108.9V114.3M721.5 106.6V109.5M729.5 108.3V111.5M730.5 109.5V112.4M736.5 117.3V121.2M738.5 114.2V118.5M750.5 105.8V107.2M751.5 105.4V107.7M758.5 103.1V104.6M762.5 99.3V102.6M765.5 96.4V98.6M766.5 96.9V99.6M767.5 97.9V101.5M769.5 101.0V104.4M770.5 102.1V104.4M771.5 100.8V103.8M773.5 97.3V100.7M774.5 95.8V99.3M777.5 95.7V98.6M779.5 95.2V98.7M785.5 99.5V104.9M791.5 101.9V104.9M795.5 91.9V96.5M803.5 90.0V93.3M806.5 89.4V93.9M807.5 91.8V96.0M809.5 92.3V94.7M812.5 86.9V89.8M816.5 77.4V84.7M818.5 67.0V73.3M822.5 82.4V85.0M833.5 90.0V93.0M834.5 90.8V92.7M836.5 89.4V91.8M837.5 90.0V92.6M843.5 95.7V100.9M846.5 93.9V97.0M850.5 94.2V95.9M854.5 97.7V100.1M858.5 93.5V98.0M864.5 99.4V104.0M873.5 119.5V123.2M877.5 117.8V120.9M878.5 115.5V118.6M879.5 113.8V117.9M887.5 111.7V113.8M891.5 111.7V113.0M907.5 105.5V109.7M910.5 105.1V107.2M913.5 100.0V102.8M923.5 107.1V111.4M933.5 107.8V111.5M934.5 109.8V113.1M947.5 137.2V139.4M950.5 134.5V137.2M960.5 134.8V139.4M962.5 130.9V134.4M963.5 130.5V132.9M964.5 130.0V132.9M970.5 130.1V132.7M974.5 133.8V139.7M980.5 133.0V134.5M982.5 133.1V136.1M984.5 132.4V135.7M991.5 128.0V131.1M996.5 134.5V136.6M999.5 136.3V138.6M1000.5 136.8V140.0M1010.5 149.6V152.3M1020.5 153.5V155.9M1023.5 151.8V154.7M1033.5 143.5V145.9M1034.5 143.7V146.2M1035.5 144.6V146.7M1038.5 144.5V146.9M1047.5 152.3V154.1M1065.5 155.3V158.2M1070.5 156.3V158.4M1072.5 157.1V158.5M1074.5 157.0V159.7M1075.5 157.7V160.0M1081.5 159.1V161.4M1083.5 159.0V161.0M1085.5 159.6V161.8M1087.5 158.4V160.9M1088.5 159.3V161.4M1089.5 158.9V161.0M1093.5 159.0V161.1M1094.5 159.3V161.4M1095.5 159.3V162.2M1096.5 160.1V161.6M1097.5 160.5V162.3M1100.5 160.2V161.3M1102.5 160.3V161.6M1105.5 159.8V162.9M1107.5 161.1V162.8M1109.5 160.6V163.2M1114.5 162.9V163.5M1118.5 162.8V163.5M1125.5 161.4V163.5M1126.5 162.1V163.5M1127.5 161.6V163.5M1129.5 162.7V163.5M1130.5 162.6V163.5M1134.5 163.0V163.5M1137.5 162.8V163.5M1141.5 162.2V163.5M1142.5 160.8V163.5M1143.5 160.8V163.5M1148.5 161.7V163.5" stroke="#58e8e8" stroke-width="1" opacity=".78"/><path d="M1.5 79.8V82.2M8.5 88.8V92.6M9.5 90.4V92.9M11.5 91.5V95.2M16.5 90.5V93.3M19.5 93.2V94.9M21.5 93.1V95.2M26.5 90.9V93.6M31.5 73.3V76.9M32.5 72.8V76.3M36.5 63.6V69.7M37.5 69.0V74.9M45.5 72.7V75.1M47.5 80.6V83.6M51.5 86.3V89.0M53.5 83.2V86.8M56.5 78.1V81.4M58.5 76.7V79.8M63.5 77.0V81.8M64.5 79.7V84.8M66.5 83.8V86.2M71.5 83.1V86.5M83.5 82.2V84.2M96.5 88.2V92.3M100.5 93.6V95.6M102.5 94.5V98.2M107.5 98.6V100.6M108.5 99.6V101.6M110.5 100.5V102.6M112.5 98.6V101.9M115.5 89.6V96.2M126.5 92.4V95.0M128.5 87.1V91.3M137.5 71.6V76.3M139.5 48.8V56.8M142.5 30.5V37.1M149.5 64.9V68.7M158.5 73.1V75.2M164.5 76.7V78.4M167.5 74.7V77.5M169.5 77.4V80.0M171.5 68.8V75.4M173.5 64.9V71.8M175.5 67.5V76.7M179.5 80.9V84.9M180.5 83.0V89.5M186.5 81.8V85.2M188.5 85.3V89.7M190.5 88.3V94.3M192.5 98.5V105.4M193.5 101.1V105.4M194.5 98.7V103.0M198.5 95.4V98.2M200.5 93.6V96.5M201.5 92.0V95.4M205.5 90.2V93.4M213.5 94.3V99.3M216.5 96.1V98.3M234.5 81.8V84.0M238.5 83.8V87.6M239.5 85.2V88.5M242.5 92.6V94.3M248.5 94.8V97.3M253.5 98.3V102.1M263.5 109.3V112.4M265.5 109.1V111.6M272.5 107.1V109.3M282.5 111.9V114.9M283.5 113.2V116.0M295.5 123.1V125.2M300.5 125.9V128.3M305.5 129.0V131.0M307.5 126.6V129.7M308.5 125.2V127.7M326.5 122.8V125.3M330.5 125.0V127.5M339.5 124.3V125.9M346.5 122.1V123.6M347.5 122.3V125.5M348.5 122.6V126.2M352.5 126.9V129.5M359.5 125.0V127.8M362.5 126.4V128.3M363.5 126.2V129.3M368.5 125.8V127.6M374.5 121.5V124.9M376.5 120.3V123.0M383.5 113.6V115.8M387.5 116.3V118.8M388.5 115.5V117.2M389.5 113.9V117.6M391.5 110.9V115.6M395.5 110.8V114.6M406.5 110.1V114.4M411.5 107.6V110.8M413.5 106.0V109.0M414.5 104.7V107.3M415.5 104.9V108.6M420.5 114.4V118.0M425.5 116.1V119.8M432.5 111.7V115.3M437.5 112.1V115.1M438.5 112.3V114.4M442.5 103.2V106.3M446.5 106.2V108.9M448.5 105.2V108.2M451.5 99.6V103.3M459.5 101.0V104.6M468.5 112.2V116.5M474.5 110.1V115.0M484.5 101.6V105.7M486.5 102.1V104.3M487.5 99.3V104.6M489.5 87.2V93.4M490.5 81.8V87.6M491.5 74.9V83.2M493.5 60.5V80.8M498.5 101.2V106.5M506.5 99.2V103.8M509.5 92.6V95.9M513.5 87.5V92.2M515.5 92.8V96.8M516.5 91.2V98.6M517.5 83.9V92.2M518.5 80.6V84.6M520.5 86.1V89.4M523.5 90.8V94.9M530.5 104.1V108.8M531.5 106.2V109.4M532.5 107.8V110.5M548.5 105.3V110.3M557.5 98.8V103.9M558.5 97.4V100.7M560.5 96.6V100.4M571.5 93.2V95.8M573.5 95.7V97.6M574.5 94.3V97.2M577.5 91.6V94.0M580.5 90.8V94.1M585.5 81.7V86.0M592.5 71.8V76.4M594.5 63.1V69.6M596.5 66.8V70.6M600.5 42.0V53.0M615.5 83.9V87.7M621.5 101.2V106.4M623.5 106.1V109.4M624.5 108.1V110.2M627.5 106.2V110.0M637.5 119.1V122.1M641.5 123.2V125.1M644.5 125.0V129.0M649.5 121.6V124.9M662.5 111.7V115.7M663.5 113.4V115.8M664.5 113.5V116.4M666.5 111.2V114.7M673.5 108.3V112.8M676.5 114.1V118.2M678.5 117.9V120.1M680.5 116.6V119.0M681.5 116.2V119.8M682.5 118.1V120.1M684.5 116.8V119.5M688.5 110.5V113.5M689.5 110.8V113.6M690.5 110.2V113.6M694.5 113.3V116.0M698.5 111.0V113.6M706.5 101.2V105.0M709.5 106.4V109.0M711.5 107.9V110.1M716.5 109.7V113.6M718.5 108.9V110.8M720.5 107.4V109.5M723.5 105.0V107.8M727.5 107.9V110.1M737.5 116.5V119.6M743.5 104.0V108.3M744.5 101.2V105.7M763.5 98.3V101.0M781.5 98.9V103.6M786.5 102.0V106.7M787.5 104.1V107.4M789.5 103.1V105.7M790.5 101.9V104.1M793.5 96.0V100.6M794.5 94.5V98.3M796.5 89.8V94.2M797.5 87.0V92.0M798.5 85.2V88.9M801.5 89.1V91.8M808.5 93.2V95.9M815.5 83.0V89.4M820.5 72.7V80.1M824.5 78.7V81.6M827.5 82.2V87.2M829.5 78.8V83.1M830.5 80.7V86.7M831.5 84.0V89.9M835.5 90.4V92.7M838.5 90.9V93.2M842.5 92.5V98.1M849.5 94.7V97.5M851.5 93.1V96.6M852.5 95.7V99.1M853.5 96.7V99.6M856.5 97.8V100.4M861.5 88.8V93.4M862.5 91.9V97.6M865.5 102.4V106.9M866.5 105.3V109.8M880.5 112.2V116.1M881.5 113.1V116.6M883.5 114.5V117.6M884.5 113.4V116.9M885.5 111.6V114.7M893.5 109.1V112.9M894.5 108.4V111.7M895.5 108.0V110.8M901.5 112.5V116.6M904.5 110.7V113.7M909.5 104.8V106.8M915.5 102.0V105.3M916.5 103.0V106.1M917.5 103.5V107.2M918.5 105.6V108.4M919.5 106.2V111.0M920.5 108.2V112.3M922.5 107.8V110.4M924.5 109.6V112.7M926.5 112.8V116.3M929.5 109.2V111.9M930.5 107.6V111.2M932.5 107.4V109.8M935.5 111.6V115.4M936.5 113.8V118.9M937.5 117.6V124.1M938.5 121.1V128.4M940.5 134.0V141.3M944.5 136.1V142.1M946.5 137.4V140.2M949.5 134.4V136.8M951.5 135.0V137.8M953.5 135.7V138.6M955.5 136.5V138.6M957.5 137.7V140.1M961.5 131.9V136.4M968.5 129.2V132.7M972.5 132.0V134.4M973.5 132.3V136.4M975.5 137.5V141.4M976.5 134.9V138.9M978.5 132.8V135.6M983.5 133.5V135.2M985.5 131.3V133.9M1002.5 140.5V143.2M1004.5 143.3V146.8M1005.5 144.6V148.7M1009.5 149.9V151.7M1018.5 152.8V154.2M1019.5 152.4V155.1M1021.5 153.1V156.4M1022.5 152.3V155.7M1024.5 150.9V153.2M1025.5 151.3V153.5M1029.5 144.4V148.8M1030.5 139.1V145.7M1039.5 145.9V148.7M1042.5 149.8V152.0M1046.5 152.0V154.2M1048.5 151.8V154.0M1057.5 154.6V157.3M1062.5 156.5V158.1M1067.5 156.3V158.1M1068.5 156.6V158.1M1071.5 156.3V159.2M1078.5 158.4V160.5M1086.5 159.0V161.3M1110.5 161.3V163.1M1111.5 162.0V163.5M1112.5 161.7V163.5M1117.5 162.2V163.5M1123.5 161.5V163.4M1136.5 162.9V163.5M1139.5 162.4V163.5M1144.5 161.8V163.2M1149.5 161.4V163.3M1150.5 161.3V163.2" stroke="#f08060" stroke-width="1" opacity=".78"/>
<polyline points="10.9,84.7 14.1,90.2 17.2,93.3 21.9,94.4 26.6,93.3 31.2,90.2 35.9,84.7 40.6,78.4 44.5,75.0 46.9,75.3 48.4,78.4 51.6,80.3 56.2,82.3 60.2,80.8 64.1,80.0 68.8,80.8 73.4,83.9 78.1,87.5 82.8,87.8 87.5,86.6 92.2,85.5 96.1,86.2 100.0,89.4 104.7,93.3 109.4,96.4 112.5,98.8 115.6,98.0 118.8,94.8 123.4,93.3 128.1,91.7 132.8,90.2 135.9,87.8 139.1,83.1 142.2,76.9 145.3,70.6 148.4,65.2 150.8,62.0 153.1,61.2 154.7,63.6 157.0,69.1 160.9,73.8 165.6,76.1 170.3,75.3 175.0,74.5 178.1,75.3 181.2,78.4 185.9,82.3 189.8,85.5 193.8,90.2 197.7,93.3 200.0,94.8 206.2,93.8 212.5,94.5 217.2,96.1 221.9,96.9 226.6,95.3 231.2,93.0 235.2,89.1 238.3,88.3 241.4,89.8 245.3,92.2 250.0,93.8 253.9,96.1 257.8,100.0 261.7,104.7 265.6,108.1 270.3,109.1 275.0,108.8 279.7,109.4 283.6,111.7 287.5,115.6 291.4,120.0 295.3,123.1 300.0,125.0 304.7,126.2 309.4,125.8 314.1,124.7 318.8,123.8 323.4,123.1 328.1,123.8 332.8,124.4 337.5,124.4 342.2,123.8 346.9,123.4 351.6,124.7 356.2,126.2 360.9,126.6 365.6,126.2 370.3,125.3 375.0,124.7 379.7,122.7 383.6,119.5 387.5,118.0 391.4,116.9 395.3,114.8 400.0,114.1 404.7,114.4 409.4,112.0 414.1,110.0 418.0,109.7 421.9,111.2 425.8,114.4 429.7,115.2 433.6,115.6 437.5,114.4 442.2,111.2 446.9,108.1 451.6,105.0 455.5,103.1 459.4,103.1 463.3,104.7 467.2,106.9 471.1,108.9 474.2,111.2 478.1,113.6 481.2,112.8 485.2,109.7 489.1,103.4 492.2,98.0 495.3,94.4 498.4,93.3 501.6,94.1 503.9,97.2 506.2,101.1 509.4,102.7 512.5,101.1 516.4,97.2 519.5,93.8 522.7,92.5 525.8,92.8 528.9,94.8 532.0,98.0 535.2,101.9 538.3,105.0 541.4,107.3 545.3,108.9 550.0,108.1 554.7,106.6 559.4,105.0 564.1,102.7 568.8,100.3 573.4,98.8 578.1,97.5 580.0,97.2 584.7,94.1 589.4,88.6 594.1,81.6 598.8,73.8 602.7,65.9 605.8,58.9 608.1,56.2 610.5,58.9 612.8,64.4 615.9,73.0 619.1,81.6 622.2,90.2 625.3,95.6 628.4,100.3 633.1,106.6 637.8,112.8 642.5,119.1 646.4,123.4 649.5,124.5 653.4,123.4 658.1,121.4 662.8,118.3 667.5,115.2 671.4,112.0 674.5,111.2 678.4,112.8 683.1,115.2 687.8,115.6 692.5,114.7 697.2,114.1 701.9,112.8 705.0,108.9 708.1,107.3 711.2,108.9 715.9,110.5 720.6,110.9 725.3,110.0 730.0,110.5 734.7,112.0 739.4,113.6 744.1,112.0 748.0,108.1 751.9,106.6 756.6,105.8 761.2,104.2 765.9,102.2 769.8,102.7 773.8,101.1 780.0,98.8 784.7,99.7 789.4,101.6 793.3,101.6 797.2,97.7 801.9,93.8 806.6,91.4 811.2,91.4 815.9,89.1 820.6,85.2 824.5,81.2 827.7,80.0 830.8,81.2 833.9,85.2 837.8,88.3 841.7,90.9 845.6,93.8 850.3,95.0 855.0,95.6 859.7,95.3 862.8,96.1 865.9,99.2 869.1,103.1 872.2,108.6 875.3,113.3 879.2,116.4 883.1,117.5 887.8,115.6 892.5,113.8 897.2,112.5 901.9,111.7 906.6,110.9 911.2,109.1 915.9,106.6 919.8,105.9 923.0,108.1 926.9,110.2 930.8,110.9 934.7,110.6 937.8,112.5 940.9,118.8 944.1,126.6 947.2,132.8 950.3,136.2 954.2,137.5 958.1,136.7 962.8,134.4 967.5,132.0 972.2,131.2 976.9,132.0 980.0,132.8 983.4,134.4 988.1,133.5 992.8,132.4 997.5,132.9 1001.4,134.8 1005.3,138.7 1010.0,144.1 1014.7,148.8 1019.4,151.6 1024.1,152.7 1028.8,151.6 1033.4,148.8 1038.1,146.9 1042.8,146.5 1047.5,149.6 1052.2,152.2 1056.9,154.3 1063.1,155.8 1069.4,156.9 1075.6,158.2 1081.9,159.4 1088.1,159.8 1094.4,160.1 1100.6,160.5 1106.9,161.3 1113.1,162.6 1119.4,163.2 1125.6,163.7 1131.9,163.7 1138.1,163.7 1144.4,163.2 1151.4,162.9" stroke="#f6f600" stroke-width="1.45" stroke-linejoin="round" stroke-linecap="round"/>
<path d="M143.5 31.5l3 1.5l2 -1.5l3.5 2" stroke="#a8c8a8" stroke-width="0.8"/>
<text x="153.5" y="39.3" font-family="Liberation Mono,monospace" font-size="12" letter-spacing="-1.35" fill="#a8c8a8">10.700</text>
<text x="1078.5" y="169.3" font-family="Liberation Mono,monospace" font-size="12" letter-spacing="-1.35" fill="#b4b4b4">1.648</text>
<path d="M1108 164.5h4M1110 162.5l2 2l-2 2" stroke="#707070" stroke-width="0.8"/>
<path d="M0 338.5H1152M0 485.5H1152" stroke="#3c0606" stroke-width="1"/>
<path d="M41.5 633.8v-1.4M52.5 633.8v-1.7M56.5 633.8v-1.9M73.5 633.8v-1.6M77.5 633.8v-1.1M83.5 633.8v-2.1M85.5 633.8v-2.1M87.5 633.8v-2.3M93.5 633.8v-2.4M101.5 633.8v-2.0M106.5 633.8v-1.8M109.5 633.8v-2.3M118.5 633.8v-4.3M123.5 633.8v-4.5M134.5 633.8v-2.5M137.5 633.8v-4.4M144.5 633.8v-3.5M146.5 633.8v-5.1M164.5 633.8v-5.1M166.5 633.8v-3.1M168.5 633.8v-4.2M169.5 633.8v-4.8M173.5 633.8v-5.1M175.5 633.8v-3.9M177.5 633.8v-5.1M179.5 633.8v-4.0M183.5 633.8v-3.2M187.5 633.8v-3.0M192.5 633.8v-3.4M194.5 633.8v-2.8M200.5 633.8v-4.2M201.5 633.8v-4.7M220.5 633.8v-3.9M227.5 633.8v-3.3M238.5 633.8v-4.0M247.5 633.8v-3.3M252.5 633.8v-4.2M262.5 633.8v-3.5M263.5 633.8v-4.6M268.5 633.8v-2.8M269.5 633.8v-2.9M272.5 633.8v-4.1M274.5 633.8v-4.5M283.5 633.8v-4.4M286.5 633.8v-5.5M295.5 633.8v-5.9M301.5 633.8v-5.7M312.5 633.8v-3.9M321.5 633.8v-3.3M326.5 633.8v-3.8M335.5 633.8v-3.9M344.5 633.8v-2.5M345.5 633.8v-3.8M346.5 633.8v-3.9M349.5 633.8v-2.1M350.5 633.8v-3.2M363.5 633.8v-2.9M381.5 633.8v-2.8M390.5 633.8v-2.1M394.5 633.8v-1.7M467.5 633.8v-1.6M471.5 633.8v-1.8M474.5 633.8v-1.5M480.5 633.8v-1.7M485.5 633.8v-2.7M504.5 633.8v-2.1M506.5 633.8v-1.9M508.5 633.8v-2.4M519.5 633.8v-2.3M522.5 633.8v-2.1M531.5 633.8v-1.4M535.5 633.8v-1.7M541.5 633.8v-1.6M544.5 633.8v-2.6M546.5 633.8v-2.3M565.5 633.8v-1.6M568.5 633.8v-1.9M584.5 633.8v-2.1M589.5 633.8v-1.4M614.5 633.8v-2.3M635.5 633.8v-2.4M642.5 633.8v-1.8M661.5 633.8v-2.8M705.5 633.8v-2.0M720.5 633.8v-1.7M734.5 633.8v-2.3M764.5 633.8v-1.7M769.5 633.8v-1.9M802.5 633.8v-1.7M814.5 633.8v-2.4M829.5 633.8v-2.1M845.5 633.8v-2.3M852.5 633.8v-2.4M872.5 633.8v-2.2M875.5 633.8v-1.9M890.5 633.8v-1.6M894.5 633.8v-2.8M915.5 633.8v-2.9M935.5 633.8v-2.2M942.5 633.8v-9.3M944.5 633.8v-14.1M952.5 633.8v-2.6M957.5 633.8v-4.5M961.5 633.8v-3.5M963.5 633.8v-4.2M964.5 633.8v-3.4M990.5 633.8v-4.5M1003.5 633.8v-3.8M1006.5 633.8v-6.3M1007.5 633.8v-5.4M1009.5 633.8v-6.2M1016.5 633.8v-5.2M1023.5 633.8v-5.4M1028.5 633.8v-6.4M1030.5 633.8v-12.9M1039.5 633.8v-3.8M1041.5 633.8v-4.0M1044.5 633.8v-5.1M1045.5 633.8v-5.5M1052.5 633.8v-6.2M1062.5 633.8v-3.1M1071.5 633.8v-4.6M1072.5 633.8v-6.2M1078.5 633.8v-3.0M1080.5 633.8v-4.9M1087.5 633.8v-4.6M1094.5 633.8v-3.8M1099.5 633.8v-3.7M1102.5 633.8v-3.7M1107.5 633.8v-5.4M1119.5 633.8v-2.9M1135.5 633.8v-3.2M1136.5 633.8v-4.4M1137.5 633.8v-5.1M1141.5 633.8v-5.6M1145.5 633.8v-4.2M1146.5 633.8v-5.3" stroke="#e8ffff" stroke-width="1"/><path d="M4.5 633.8v-1.4M6.5 633.8v-0.9M14.5 633.8v-1.4M24.5 633.8v-2.0M31.5 633.8v-2.1M36.5 633.8v-1.2M40.5 633.8v-2.1M54.5 633.8v-2.1M62.5 633.8v-1.4M64.5 633.8v-1.3M66.5 633.8v-1.8M80.5 633.8v-1.7M88.5 633.8v-1.7M96.5 633.8v-1.7M97.5 633.8v-1.3M113.5 633.8v-2.9M115.5 633.8v-2.9M116.5 633.8v-3.8M117.5 633.8v-3.1M120.5 633.8v-5.2M121.5 633.8v-2.7M122.5 633.8v-4.9M125.5 633.8v-2.6M126.5 633.8v-3.8M127.5 633.8v-4.8M128.5 633.8v-2.9M129.5 633.8v-4.2M132.5 633.8v-4.4M133.5 633.8v-3.8M135.5 633.8v-4.5M136.5 633.8v-3.3M140.5 633.8v-5.0M142.5 633.8v-2.9M147.5 633.8v-4.3M154.5 633.8v-4.8M155.5 633.8v-2.7M157.5 633.8v-3.8M158.5 633.8v-4.7M159.5 633.8v-4.7M161.5 633.8v-2.9M165.5 633.8v-5.1M170.5 633.8v-3.3M174.5 633.8v-4.0M176.5 633.8v-4.1M180.5 633.8v-4.3M181.5 633.8v-3.9M184.5 633.8v-2.8M186.5 633.8v-3.8M188.5 633.8v-5.0M189.5 633.8v-4.6M190.5 633.8v-3.0M191.5 633.8v-4.3M195.5 633.8v-3.1M196.5 633.8v-3.9M197.5 633.8v-3.5M198.5 633.8v-3.9M202.5 633.8v-4.8M204.5 633.8v-4.9M207.5 633.8v-4.8M209.5 633.8v-3.2M210.5 633.8v-4.7M211.5 633.8v-4.6M213.5 633.8v-2.5M215.5 633.8v-5.0M218.5 633.8v-3.0M219.5 633.8v-2.7M221.5 633.8v-4.0M222.5 633.8v-2.9M224.5 633.8v-4.9M228.5 633.8v-3.8M229.5 633.8v-4.0M231.5 633.8v-2.9M232.5 633.8v-4.4M233.5 633.8v-3.0M234.5 633.8v-3.8M237.5 633.8v-4.1M242.5 633.8v-4.6M245.5 633.8v-4.5M246.5 633.8v-4.3M248.5 633.8v-2.5M251.5 633.8v-4.2M253.5 633.8v-3.8M256.5 633.8v-4.9M258.5 633.8v-3.0M259.5 633.8v-2.4M260.5 633.8v-3.2M265.5 633.8v-4.4M270.5 633.8v-4.2M271.5 633.8v-5.2M273.5 633.8v-3.7M276.5 633.8v-3.6M277.5 633.8v-3.5M280.5 633.8v-5.2M284.5 633.8v-6.2M288.5 633.8v-5.1M289.5 633.8v-5.2M290.5 633.8v-3.8M291.5 633.8v-5.0M293.5 633.8v-4.8M294.5 633.8v-5.2M297.5 633.8v-5.9M300.5 633.8v-4.6M303.5 633.8v-5.8M306.5 633.8v-3.2M307.5 633.8v-3.9M308.5 633.8v-4.9M309.5 633.8v-4.6M313.5 633.8v-3.3M315.5 633.8v-2.8M317.5 633.8v-4.6M318.5 633.8v-3.6M319.5 633.8v-4.6M323.5 633.8v-3.5M325.5 633.8v-2.6M327.5 633.8v-4.1M328.5 633.8v-4.2M330.5 633.8v-2.5M332.5 633.8v-2.9M334.5 633.8v-3.1M337.5 633.8v-4.3M338.5 633.8v-4.0M339.5 633.8v-2.8M341.5 633.8v-2.6M342.5 633.8v-2.9M343.5 633.8v-3.0M348.5 633.8v-4.0M352.5 633.8v-3.7M354.5 633.8v-2.1M358.5 633.8v-3.3M361.5 633.8v-2.7M365.5 633.8v-3.7M371.5 633.8v-3.4M372.5 633.8v-2.6M374.5 633.8v-2.5M375.5 633.8v-2.2M387.5 633.8v-2.0M400.5 633.8v-2.2M407.5 633.8v-1.7M408.5 633.8v-1.5M409.5 633.8v-2.8M419.5 633.8v-1.6M450.5 633.8v-2.4M454.5 633.8v-2.7M459.5 633.8v-2.1M461.5 633.8v-1.5M466.5 633.8v-2.4M479.5 633.8v-1.5M487.5 633.8v-2.3M500.5 633.8v-2.4M502.5 633.8v-2.5M520.5 633.8v-1.9M521.5 633.8v-1.6M523.5 633.8v-1.5M528.5 633.8v-2.6M551.5 633.8v-2.3M561.5 633.8v-1.7M567.5 633.8v-2.0M573.5 633.8v-2.0M578.5 633.8v-2.0M579.5 633.8v-2.5M588.5 633.8v-1.7M596.5 633.8v-1.4M599.5 633.8v-2.5M603.5 633.8v-2.1M605.5 633.8v-2.1M611.5 633.8v-2.7M622.5 633.8v-2.3M623.5 633.8v-2.3M639.5 633.8v-3.0M643.5 633.8v-2.2M659.5 633.8v-2.7M688.5 633.8v-3.0M691.5 633.8v-1.9M703.5 633.8v-2.3M708.5 633.8v-2.9M726.5 633.8v-2.0M727.5 633.8v-2.7M730.5 633.8v-2.7M741.5 633.8v-1.9M746.5 633.8v-2.7M748.5 633.8v-2.4M771.5 633.8v-2.1M775.5 633.8v-2.0M779.5 633.8v-2.3M780.5 633.8v-2.7M781.5 633.8v-2.1M782.5 633.8v-2.7M789.5 633.8v-2.5M803.5 633.8v-1.9M817.5 633.8v-1.6M833.5 633.8v-2.9M837.5 633.8v-1.8M843.5 633.8v-1.8M844.5 633.8v-2.8M849.5 633.8v-2.8M851.5 633.8v-2.0M855.5 633.8v-2.8M870.5 633.8v-2.1M876.5 633.8v-1.9M888.5 633.8v-2.7M892.5 633.8v-2.0M910.5 633.8v-2.4M911.5 633.8v-1.8M912.5 633.8v-2.6M914.5 633.8v-1.5M918.5 633.8v-1.6M936.5 633.8v-2.0M939.5 633.8v-5.1M940.5 633.8v-6.3M946.5 633.8v-8.6M947.5 633.8v-9.9M948.5 633.8v-6.9M949.5 633.8v-6.5M950.5 633.8v-5.4M953.5 633.8v-4.0M954.5 633.8v-3.1M955.5 633.8v-3.5M956.5 633.8v-3.8M958.5 633.8v-2.5M959.5 633.8v-5.1M962.5 633.8v-3.5M966.5 633.8v-2.7M967.5 633.8v-3.2M968.5 633.8v-4.7M969.5 633.8v-4.9M972.5 633.8v-4.9M978.5 633.8v-4.4M980.5 633.8v-4.2M981.5 633.8v-4.6M983.5 633.8v-5.2M984.5 633.8v-4.8M985.5 633.8v-4.7M986.5 633.8v-3.9M987.5 633.8v-2.9M988.5 633.8v-4.7M991.5 633.8v-2.9M994.5 633.8v-3.2M997.5 633.8v-4.0M998.5 633.8v-3.9M1004.5 633.8v-4.2M1005.5 633.8v-4.3M1008.5 633.8v-7.3M1010.5 633.8v-7.7M1011.5 633.8v-6.5M1013.5 633.8v-5.9M1018.5 633.8v-6.9M1019.5 633.8v-5.3M1020.5 633.8v-6.2M1024.5 633.8v-4.5M1026.5 633.8v-8.0M1027.5 633.8v-8.8M1029.5 633.8v-10.2M1032.5 633.8v-12.4M1035.5 633.8v-7.9M1036.5 633.8v-5.3M1037.5 633.8v-6.1M1038.5 633.8v-4.8M1040.5 633.8v-4.0M1042.5 633.8v-6.0M1047.5 633.8v-5.6M1050.5 633.8v-3.8M1053.5 633.8v-4.9M1056.5 633.8v-5.2M1057.5 633.8v-6.0M1058.5 633.8v-4.9M1059.5 633.8v-6.3M1060.5 633.8v-5.9M1061.5 633.8v-5.2M1065.5 633.8v-4.7M1066.5 633.8v-4.7M1067.5 633.8v-4.7M1068.5 633.8v-4.6M1069.5 633.8v-5.3M1070.5 633.8v-4.6M1073.5 633.8v-3.4M1081.5 633.8v-6.0M1083.5 633.8v-3.1M1085.5 633.8v-3.0M1089.5 633.8v-2.9M1091.5 633.8v-5.6M1092.5 633.8v-4.0M1095.5 633.8v-4.6M1096.5 633.8v-5.1M1098.5 633.8v-3.5M1100.5 633.8v-5.4M1104.5 633.8v-3.5M1105.5 633.8v-3.8M1109.5 633.8v-3.6M1111.5 633.8v-4.0M1113.5 633.8v-4.1M1116.5 633.8v-4.0M1120.5 633.8v-4.0M1121.5 633.8v-5.7M1126.5 633.8v-5.7M1129.5 633.8v-5.7M1130.5 633.8v-4.0M1132.5 633.8v-3.0M1133.5 633.8v-3.9M1134.5 633.8v-3.7M1138.5 633.8v-5.7M1139.5 633.8v-3.5M1142.5 633.8v-3.3M1143.5 633.8v-4.5M1148.5 633.8v-5.7M1149.5 633.8v-5.1M1150.5 633.8v-2.9" stroke="#50e0e0" stroke-width="1"/><path d="M0.5 633.8v-1.1M1.5 633.8v-1.6M2.5 633.8v-1.2M3.5 633.8v-1.0M5.5 633.8v-0.9M7.5 633.8v-1.5M9.5 633.8v-1.5M10.5 633.8v-1.0M11.5 633.8v-1.4M12.5 633.8v-1.1M13.5 633.8v-0.9M15.5 633.8v-1.5M16.5 633.8v-1.5M17.5 633.8v-1.4M19.5 633.8v-1.9M20.5 633.8v-1.3M21.5 633.8v-1.3M22.5 633.8v-1.8M23.5 633.8v-1.9M25.5 633.8v-1.0M26.5 633.8v-2.0M27.5 633.8v-2.1M28.5 633.8v-1.1M29.5 633.8v-1.9M30.5 633.8v-1.1M32.5 633.8v-1.1M33.5 633.8v-1.1M34.5 633.8v-1.9M35.5 633.8v-1.7M37.5 633.8v-1.2M38.5 633.8v-1.2M39.5 633.8v-1.3M42.5 633.8v-1.3M43.5 633.8v-2.0M45.5 633.8v-1.3M46.5 633.8v-1.9M47.5 633.8v-1.4M48.5 633.8v-1.2M49.5 633.8v-1.3M50.5 633.8v-1.5M51.5 633.8v-2.2M53.5 633.8v-1.3M55.5 633.8v-1.4M58.5 633.8v-2.1M59.5 633.8v-1.6M61.5 633.8v-1.4M63.5 633.8v-1.8M65.5 633.8v-1.2M67.5 633.8v-1.8M68.5 633.8v-2.2M69.5 633.8v-1.1M70.5 633.8v-1.6M71.5 633.8v-1.3M72.5 633.8v-1.8M74.5 633.8v-2.3M75.5 633.8v-2.0M76.5 633.8v-1.3M79.5 633.8v-1.2M82.5 633.8v-1.2M84.5 633.8v-2.1M86.5 633.8v-1.6M89.5 633.8v-2.2M90.5 633.8v-1.9M91.5 633.8v-1.9M92.5 633.8v-1.3M94.5 633.8v-2.1M95.5 633.8v-2.1M98.5 633.8v-1.2M99.5 633.8v-1.8M100.5 633.8v-2.1M102.5 633.8v-1.5M103.5 633.8v-1.6M104.5 633.8v-1.5M105.5 633.8v-2.4M107.5 633.8v-1.6M108.5 633.8v-1.5M110.5 633.8v-2.4M111.5 633.8v-2.0M112.5 633.8v-1.4M114.5 633.8v-3.3M119.5 633.8v-3.4M124.5 633.8v-3.4M131.5 633.8v-4.7M139.5 633.8v-3.6M143.5 633.8v-4.2M145.5 633.8v-4.9M148.5 633.8v-4.5M150.5 633.8v-3.1M151.5 633.8v-5.2M152.5 633.8v-4.0M153.5 633.8v-3.4M160.5 633.8v-3.4M171.5 633.8v-4.8M172.5 633.8v-3.1M178.5 633.8v-3.6M182.5 633.8v-5.1M185.5 633.8v-4.7M203.5 633.8v-4.5M205.5 633.8v-3.3M206.5 633.8v-3.0M214.5 633.8v-4.3M223.5 633.8v-4.7M225.5 633.8v-2.6M230.5 633.8v-4.3M235.5 633.8v-4.8M236.5 633.8v-4.3M239.5 633.8v-5.0M240.5 633.8v-3.1M243.5 633.8v-4.8M250.5 633.8v-3.0M261.5 633.8v-2.8M267.5 633.8v-2.5M279.5 633.8v-4.0M281.5 633.8v-6.1M282.5 633.8v-3.2M285.5 633.8v-4.8M287.5 633.8v-6.4M296.5 633.8v-6.7M298.5 633.8v-3.7M304.5 633.8v-4.0M305.5 633.8v-6.1M314.5 633.8v-4.8M320.5 633.8v-4.2M322.5 633.8v-4.4M324.5 633.8v-2.6M336.5 633.8v-4.3M340.5 633.8v-4.2M353.5 633.8v-3.1M355.5 633.8v-3.5M367.5 633.8v-3.6M368.5 633.8v-3.5M373.5 633.8v-3.2M377.5 633.8v-1.9M378.5 633.8v-2.0M379.5 633.8v-3.2M380.5 633.8v-1.8M382.5 633.8v-1.8M383.5 633.8v-2.0M384.5 633.8v-2.1M385.5 633.8v-2.8M386.5 633.8v-2.0M388.5 633.8v-2.2M389.5 633.8v-3.1M391.5 633.8v-3.2M393.5 633.8v-2.4M395.5 633.8v-3.0M396.5 633.8v-2.5M398.5 633.8v-2.7M399.5 633.8v-1.6M401.5 633.8v-2.7M402.5 633.8v-1.8M403.5 633.8v-2.1M404.5 633.8v-2.9M406.5 633.8v-1.9M410.5 633.8v-1.6M411.5 633.8v-2.6M412.5 633.8v-2.2M413.5 633.8v-3.0M414.5 633.8v-2.8M415.5 633.8v-2.7M416.5 633.8v-2.8M417.5 633.8v-2.7M418.5 633.8v-2.2M420.5 633.8v-1.9M421.5 633.8v-1.5M422.5 633.8v-2.1M423.5 633.8v-1.9M424.5 633.8v-1.5M426.5 633.8v-2.6M427.5 633.8v-1.4M428.5 633.8v-2.4M429.5 633.8v-2.1M431.5 633.8v-2.5M432.5 633.8v-2.2M433.5 633.8v-1.9M434.5 633.8v-1.7M435.5 633.8v-1.9M436.5 633.8v-1.7M437.5 633.8v-2.4M438.5 633.8v-2.7M439.5 633.8v-2.4M440.5 633.8v-2.5M441.5 633.8v-1.5M442.5 633.8v-2.3M443.5 633.8v-1.6M444.5 633.8v-2.5M445.5 633.8v-1.4M446.5 633.8v-1.5M447.5 633.8v-1.9M448.5 633.8v-2.6M449.5 633.8v-2.1M451.5 633.8v-1.9M452.5 633.8v-1.9M453.5 633.8v-1.9M455.5 633.8v-2.3M456.5 633.8v-1.3M457.5 633.8v-1.8M458.5 633.8v-1.5M460.5 633.8v-2.5M462.5 633.8v-2.6M463.5 633.8v-1.8M464.5 633.8v-1.5M465.5 633.8v-2.7M468.5 633.8v-2.2M469.5 633.8v-1.4M470.5 633.8v-2.2M472.5 633.8v-1.8M475.5 633.8v-2.1M476.5 633.8v-2.1M478.5 633.8v-2.5M481.5 633.8v-1.7M482.5 633.8v-2.5M483.5 633.8v-2.1M484.5 633.8v-1.4M486.5 633.8v-2.3M488.5 633.8v-1.9M489.5 633.8v-2.5M490.5 633.8v-1.6M491.5 633.8v-1.5M492.5 633.8v-2.1M493.5 633.8v-2.1M494.5 633.8v-2.1M495.5 633.8v-2.2M496.5 633.8v-2.3M497.5 633.8v-2.7M498.5 633.8v-2.0M499.5 633.8v-2.2M503.5 633.8v-1.9M505.5 633.8v-2.1M507.5 633.8v-1.8M509.5 633.8v-2.4M510.5 633.8v-2.4M511.5 633.8v-2.2M512.5 633.8v-1.5M513.5 633.8v-2.0M514.5 633.8v-1.4M515.5 633.8v-2.1M516.5 633.8v-1.8M517.5 633.8v-1.7M524.5 633.8v-1.5M525.5 633.8v-2.7M526.5 633.8v-1.7M527.5 633.8v-1.8M529.5 633.8v-1.9M530.5 633.8v-2.2M532.5 633.8v-1.8M534.5 633.8v-2.0M536.5 633.8v-2.6M537.5 633.8v-2.5M538.5 633.8v-2.0M540.5 633.8v-1.6M542.5 633.8v-1.4M543.5 633.8v-2.4M545.5 633.8v-2.3M547.5 633.8v-2.0M548.5 633.8v-1.6M549.5 633.8v-2.3M550.5 633.8v-1.6M552.5 633.8v-1.9M553.5 633.8v-2.6M554.5 633.8v-1.6M555.5 633.8v-2.7M556.5 633.8v-1.7M558.5 633.8v-2.0M559.5 633.8v-2.1M560.5 633.8v-2.2M562.5 633.8v-1.4M563.5 633.8v-2.4M564.5 633.8v-1.7M566.5 633.8v-2.7M569.5 633.8v-2.0M570.5 633.8v-2.1M571.5 633.8v-1.8M572.5 633.8v-2.4M574.5 633.8v-2.3M575.5 633.8v-2.7M576.5 633.8v-2.4M577.5 633.8v-2.2M580.5 633.8v-1.7M581.5 633.8v-1.6M582.5 633.8v-2.0M583.5 633.8v-2.2M585.5 633.8v-1.6M586.5 633.8v-1.3M587.5 633.8v-1.9M590.5 633.8v-2.1M591.5 633.8v-2.5M592.5 633.8v-1.5M593.5 633.8v-1.4M594.5 633.8v-2.2M595.5 633.8v-1.7M597.5 633.8v-1.6M598.5 633.8v-1.6M600.5 633.8v-1.4M601.5 633.8v-1.9M602.5 633.8v-2.8M604.5 633.8v-2.8M606.5 633.8v-1.5M607.5 633.8v-2.8M608.5 633.8v-2.0M609.5 633.8v-2.1M612.5 633.8v-1.8M613.5 633.8v-2.4M615.5 633.8v-2.1M616.5 633.8v-3.2M617.5 633.8v-1.6M618.5 633.8v-2.7M619.5 633.8v-2.2M620.5 633.8v-3.1M621.5 633.8v-3.1M624.5 633.8v-2.0M625.5 633.8v-2.0M626.5 633.8v-1.9M627.5 633.8v-2.0M628.5 633.8v-2.2M629.5 633.8v-3.4M630.5 633.8v-3.2M631.5 633.8v-2.3M632.5 633.8v-2.9M633.5 633.8v-2.1M634.5 633.8v-2.0M636.5 633.8v-2.9M637.5 633.8v-2.3M638.5 633.8v-3.3M640.5 633.8v-3.3M641.5 633.8v-2.2M644.5 633.8v-2.6M645.5 633.8v-2.4M646.5 633.8v-1.7M647.5 633.8v-2.7M648.5 633.8v-2.2M649.5 633.8v-2.6M650.5 633.8v-2.9M651.5 633.8v-3.0M652.5 633.8v-1.9M653.5 633.8v-2.2M654.5 633.8v-2.4M655.5 633.8v-3.2M656.5 633.8v-2.2M657.5 633.8v-2.0M658.5 633.8v-1.7M660.5 633.8v-3.4M662.5 633.8v-2.0M664.5 633.8v-3.2M665.5 633.8v-2.7M666.5 633.8v-2.4M667.5 633.8v-1.7M668.5 633.8v-2.2M669.5 633.8v-2.1M670.5 633.8v-2.3M671.5 633.8v-1.9M672.5 633.8v-2.0M673.5 633.8v-2.2M674.5 633.8v-1.8M675.5 633.8v-2.8M676.5 633.8v-2.8M677.5 633.8v-2.2M678.5 633.8v-1.7M679.5 633.8v-1.6M680.5 633.8v-2.5M681.5 633.8v-2.1M682.5 633.8v-1.6M683.5 633.8v-3.0M684.5 633.8v-2.0M685.5 633.8v-1.8M687.5 633.8v-2.1M689.5 633.8v-2.5M690.5 633.8v-2.2M692.5 633.8v-2.9M693.5 633.8v-2.9M694.5 633.8v-1.7M695.5 633.8v-1.9M696.5 633.8v-3.0M697.5 633.8v-1.8M698.5 633.8v-2.5M699.5 633.8v-1.4M700.5 633.8v-2.0M701.5 633.8v-2.2M702.5 633.8v-2.3M704.5 633.8v-2.9M706.5 633.8v-1.9M707.5 633.8v-2.5M709.5 633.8v-1.7M710.5 633.8v-2.2M711.5 633.8v-2.0M712.5 633.8v-2.6M713.5 633.8v-1.8M714.5 633.8v-1.9M715.5 633.8v-2.2M716.5 633.8v-1.5M717.5 633.8v-1.6M718.5 633.8v-1.6M719.5 633.8v-2.6M721.5 633.8v-2.8M722.5 633.8v-1.8M723.5 633.8v-2.7M724.5 633.8v-2.5M725.5 633.8v-2.5M728.5 633.8v-2.3M729.5 633.8v-2.5M731.5 633.8v-1.6M732.5 633.8v-2.5M733.5 633.8v-1.7M735.5 633.8v-2.9M736.5 633.8v-2.5M737.5 633.8v-2.4M739.5 633.8v-1.5M740.5 633.8v-1.6M742.5 633.8v-3.0M743.5 633.8v-1.9M744.5 633.8v-2.3M745.5 633.8v-2.0M747.5 633.8v-1.9M749.5 633.8v-3.0M750.5 633.8v-2.5M751.5 633.8v-2.7M752.5 633.8v-1.7M753.5 633.8v-2.9M754.5 633.8v-2.2M755.5 633.8v-1.9M756.5 633.8v-2.3M757.5 633.8v-2.4M758.5 633.8v-1.8M759.5 633.8v-2.0M760.5 633.8v-1.5M761.5 633.8v-2.8M762.5 633.8v-1.6M765.5 633.8v-2.2M766.5 633.8v-2.7M767.5 633.8v-1.5M768.5 633.8v-2.5M772.5 633.8v-2.6M773.5 633.8v-1.5M774.5 633.8v-1.6M776.5 633.8v-1.9M777.5 633.8v-1.4M778.5 633.8v-2.9M783.5 633.8v-3.0M784.5 633.8v-2.9M785.5 633.8v-2.5M786.5 633.8v-2.8M787.5 633.8v-2.3M788.5 633.8v-2.0M790.5 633.8v-2.0M791.5 633.8v-2.0M792.5 633.8v-2.8M793.5 633.8v-1.6M794.5 633.8v-2.6M795.5 633.8v-2.6M796.5 633.8v-2.5M797.5 633.8v-1.6M798.5 633.8v-2.0M799.5 633.8v-1.4M800.5 633.8v-2.1M806.5 633.8v-1.8M807.5 633.8v-2.5M808.5 633.8v-1.9M809.5 633.8v-2.9M810.5 633.8v-1.7M811.5 633.8v-3.0M812.5 633.8v-2.4M813.5 633.8v-2.4M815.5 633.8v-2.8M816.5 633.8v-2.2M818.5 633.8v-2.5M819.5 633.8v-2.5M820.5 633.8v-2.0M821.5 633.8v-2.4M822.5 633.8v-2.2M823.5 633.8v-2.4M824.5 633.8v-2.4M825.5 633.8v-2.9M827.5 633.8v-2.6M831.5 633.8v-2.2M832.5 633.8v-2.7M834.5 633.8v-2.7M835.5 633.8v-3.0M836.5 633.8v-2.8M838.5 633.8v-2.1M839.5 633.8v-2.8M840.5 633.8v-1.9M841.5 633.8v-1.5M842.5 633.8v-2.7M846.5 633.8v-2.7M847.5 633.8v-2.0M848.5 633.8v-1.5M850.5 633.8v-1.6M854.5 633.8v-1.8M856.5 633.8v-1.7M857.5 633.8v-2.1M858.5 633.8v-2.0M859.5 633.8v-2.4M860.5 633.8v-2.4M861.5 633.8v-1.7M862.5 633.8v-2.5M863.5 633.8v-1.6M864.5 633.8v-2.9M865.5 633.8v-2.0M866.5 633.8v-3.0M867.5 633.8v-2.6M868.5 633.8v-1.9M869.5 633.8v-1.7M871.5 633.8v-2.1M873.5 633.8v-2.0M874.5 633.8v-1.8M877.5 633.8v-2.5M878.5 633.8v-2.9M879.5 633.8v-2.6M880.5 633.8v-2.1M881.5 633.8v-2.1M883.5 633.8v-1.9M884.5 633.8v-2.5M885.5 633.8v-2.1M886.5 633.8v-2.8M887.5 633.8v-2.1M889.5 633.8v-2.4M891.5 633.8v-1.6M893.5 633.8v-2.5M895.5 633.8v-1.5M896.5 633.8v-2.2M897.5 633.8v-2.2M898.5 633.8v-2.5M900.5 633.8v-3.0M901.5 633.8v-2.7M903.5 633.8v-1.5M904.5 633.8v-2.1M906.5 633.8v-1.8M907.5 633.8v-1.7M908.5 633.8v-2.6M909.5 633.8v-1.7M913.5 633.8v-1.6M916.5 633.8v-1.5M917.5 633.8v-2.3M919.5 633.8v-1.9M920.5 633.8v-1.6M921.5 633.8v-1.6M922.5 633.8v-2.2M923.5 633.8v-2.6M924.5 633.8v-2.1M925.5 633.8v-1.8M926.5 633.8v-2.4M927.5 633.8v-2.9M928.5 633.8v-3.0M929.5 633.8v-3.3M930.5 633.8v-2.4M932.5 633.8v-2.5M933.5 633.8v-2.1M937.5 633.8v-3.8M938.5 633.8v-6.6M941.5 633.8v-7.1M943.5 633.8v-12.7M945.5 633.8v-10.0M951.5 633.8v-3.2M960.5 633.8v-4.1M971.5 633.8v-2.8M973.5 633.8v-3.4M977.5 633.8v-4.1M982.5 633.8v-4.5M989.5 633.8v-2.9M992.5 633.8v-3.5M993.5 633.8v-4.2M995.5 633.8v-4.2M996.5 633.8v-3.0M999.5 633.8v-4.6M1014.5 633.8v-3.9M1017.5 633.8v-5.7M1021.5 633.8v-4.5M1031.5 633.8v-15.8M1034.5 633.8v-7.0M1043.5 633.8v-6.0M1046.5 633.8v-5.3M1048.5 633.8v-3.2M1049.5 633.8v-4.3M1054.5 633.8v-3.8M1055.5 633.8v-3.4M1064.5 633.8v-5.8M1075.5 633.8v-6.0M1076.5 633.8v-6.1M1077.5 633.8v-5.8M1082.5 633.8v-4.6M1084.5 633.8v-5.7M1088.5 633.8v-5.4M1090.5 633.8v-5.5M1097.5 633.8v-3.7M1103.5 633.8v-3.7M1110.5 633.8v-4.2M1112.5 633.8v-5.7M1114.5 633.8v-5.3M1115.5 633.8v-3.9M1118.5 633.8v-4.3M1122.5 633.8v-3.5M1123.5 633.8v-5.8M1124.5 633.8v-3.9M1131.5 633.8v-3.6M1144.5 633.8v-5.2M1147.5 633.8v-3.3" stroke="#d01818" stroke-width="1"/><path d="M8.5 633.8v-1.8M18.5 633.8v-2.0M44.5 633.8v-1.2M57.5 633.8v-1.3M60.5 633.8v-1.1M78.5 633.8v-2.0M81.5 633.8v-1.5M130.5 633.8v-4.3M138.5 633.8v-4.2M141.5 633.8v-5.1M149.5 633.8v-4.3M156.5 633.8v-4.0M162.5 633.8v-3.9M163.5 633.8v-4.8M167.5 633.8v-3.3M193.5 633.8v-2.8M199.5 633.8v-3.0M208.5 633.8v-3.1M212.5 633.8v-3.5M216.5 633.8v-3.8M217.5 633.8v-3.8M226.5 633.8v-3.7M241.5 633.8v-4.4M244.5 633.8v-4.3M249.5 633.8v-4.1M254.5 633.8v-5.1M255.5 633.8v-4.3M257.5 633.8v-3.9M264.5 633.8v-4.7M266.5 633.8v-3.9M275.5 633.8v-3.5M278.5 633.8v-3.3M292.5 633.8v-4.7M299.5 633.8v-6.1M302.5 633.8v-5.3M310.5 633.8v-3.1M311.5 633.8v-4.5M316.5 633.8v-4.8M329.5 633.8v-2.8M331.5 633.8v-4.0M333.5 633.8v-3.1M347.5 633.8v-2.4M351.5 633.8v-4.1M356.5 633.8v-2.1M357.5 633.8v-2.2M359.5 633.8v-2.4M360.5 633.8v-3.0M362.5 633.8v-3.9M364.5 633.8v-3.3M366.5 633.8v-3.5M369.5 633.8v-3.7M370.5 633.8v-2.9M376.5 633.8v-2.3M392.5 633.8v-2.6M397.5 633.8v-2.0M405.5 633.8v-2.5M425.5 633.8v-2.0M430.5 633.8v-1.3M473.5 633.8v-1.5M477.5 633.8v-2.6M501.5 633.8v-2.0M518.5 633.8v-2.6M533.5 633.8v-2.7M539.5 633.8v-2.6M557.5 633.8v-1.4M610.5 633.8v-1.5M663.5 633.8v-2.8M686.5 633.8v-2.5M738.5 633.8v-2.9M763.5 633.8v-2.2M770.5 633.8v-2.8M801.5 633.8v-2.3M804.5 633.8v-1.6M805.5 633.8v-2.1M826.5 633.8v-2.2M828.5 633.8v-2.6M830.5 633.8v-1.6M853.5 633.8v-1.5M882.5 633.8v-2.1M899.5 633.8v-2.9M902.5 633.8v-2.5M905.5 633.8v-1.8M931.5 633.8v-3.3M934.5 633.8v-3.3M965.5 633.8v-3.9M970.5 633.8v-3.3M974.5 633.8v-4.7M975.5 633.8v-2.7M976.5 633.8v-2.7M979.5 633.8v-5.2M1000.5 633.8v-4.1M1001.5 633.8v-4.0M1002.5 633.8v-3.4M1012.5 633.8v-4.7M1015.5 633.8v-5.0M1022.5 633.8v-3.5M1025.5 633.8v-7.7M1033.5 633.8v-12.6M1051.5 633.8v-4.3M1063.5 633.8v-6.2M1074.5 633.8v-4.1M1079.5 633.8v-4.9M1086.5 633.8v-5.6M1093.5 633.8v-3.0M1101.5 633.8v-3.7M1106.5 633.8v-5.2M1108.5 633.8v-3.1M1117.5 633.8v-4.7M1125.5 633.8v-3.3M1127.5 633.8v-3.2M1128.5 633.8v-5.5M1140.5 633.8v-3.7M1151.5 633.8v-3.3" stroke="#e8a0b0" stroke-width="1"/><polyline points="0.5,632.2 2.5,632.7 4.5,632.4 6.5,631.6 8.5,631.7 10.5,631.9 12.5,632.4 14.5,632.3 16.5,632.5 18.5,631.6 20.5,632.6 22.5,631.8 24.5,631.3 26.5,631.5 28.5,631.6 30.5,631.2 32.5,632.5 34.5,631.7 36.5,631.8 38.5,632.1 40.5,631.4 42.5,631.4 44.5,632.2 46.5,631.7 48.5,631.7 50.5,631.6 52.5,631.2 54.5,630.9 56.5,631.1 58.5,631.7 60.5,632.1 62.5,631.1 64.5,632.4 66.5,632.0 68.5,631.0 70.5,632.1 72.5,631.5 74.5,631.5 76.5,631.7 78.5,631.7 80.5,632.2 82.5,631.2 84.5,631.5 86.5,631.1 88.5,631.2 90.5,631.0 92.5,631.0 94.5,631.5 96.5,632.3 98.5,631.7 100.5,631.6 102.5,631.8 104.5,630.9 106.5,631.7 108.5,631.6 110.5,631.1 112.5,630.5 114.5,630.0 116.5,629.2 118.5,629.4 120.5,628.3 122.5,629.0 124.5,629.7 126.5,628.9 128.5,628.8 130.5,628.4 132.5,629.3 134.5,628.5 136.5,629.0 138.5,629.3 140.5,628.3 142.5,628.7 144.5,628.5 146.5,628.4 148.5,629.2 150.5,627.9 152.5,629.5 154.5,628.8 156.5,629.8 158.5,629.1 160.5,629.7 162.5,628.3 164.5,627.9 166.5,629.7 168.5,628.5 170.5,628.3 172.5,628.1 174.5,629.1 176.5,628.0 178.5,629.8 180.5,628.8 182.5,628.6 184.5,629.1 186.5,629.2 188.5,629.0 190.5,629.1 192.5,630.2 194.5,630.0 196.5,629.4 198.5,629.1 200.5,628.2 202.5,628.5 204.5,629.0 206.5,628.4 208.5,630.7 210.5,628.2 212.5,629.5 214.5,628.6 216.5,630.0 218.5,630.3 220.5,629.2 222.5,628.2 224.5,628.4 226.5,630.2 228.5,629.2 230.5,629.6 232.5,628.6 234.5,628.3 236.5,628.8 238.5,628.0 240.5,629.0 242.5,628.2 244.5,628.8 246.5,629.1 248.5,629.5 250.5,629.4 252.5,629.8 254.5,628.8 256.5,628.2 258.5,630.8 260.5,630.1 262.5,628.5 264.5,628.5 266.5,629.6 268.5,630.7 270.5,628.5 272.5,629.7 274.5,628.7 276.5,629.6 278.5,628.9 280.5,627.6 282.5,628.6 284.5,626.8 286.5,627.3 288.5,627.7 290.5,628.4 292.5,628.2 294.5,627.2 296.5,626.9 298.5,627.6 300.5,627.7 302.5,627.7 304.5,627.8 306.5,629.2 308.5,628.5 310.5,629.0 312.5,629.3 314.5,628.9 316.5,628.9 318.5,628.7 320.5,629.6 322.5,629.3 324.5,631.3 326.5,629.9 328.5,629.4 330.5,629.4 332.5,629.9 334.5,629.4 336.5,629.2 338.5,629.6 340.5,629.5 342.5,630.5 344.5,629.1 346.5,630.0 348.5,629.6 350.5,629.2 352.5,629.4 354.5,629.9 356.5,631.1 358.5,629.7 360.5,630.0 362.5,629.8 364.5,629.7 366.5,629.3 368.5,629.7 370.5,630.4 372.5,629.9 374.5,631.4 376.5,631.5 378.5,630.2 380.5,630.9 382.5,631.2 384.5,630.4 386.5,631.6 388.5,630.1 390.5,630.0 392.5,630.6 394.5,630.5 396.5,631.0 398.5,631.2 400.5,630.8 402.5,630.9 404.5,630.1 406.5,632.0 408.5,631.1 410.5,631.1 412.5,630.3 414.5,630.7 416.5,631.0 418.5,631.3 420.5,631.5 422.5,631.1 424.5,631.5 426.5,630.7 428.5,630.9 430.5,630.9 432.5,631.7 434.5,631.3 436.5,631.5 438.5,631.3 440.5,631.0 442.5,631.7 444.5,631.4 446.5,631.7 448.5,630.8 450.5,631.5 452.5,631.0 454.5,630.3 456.5,631.7 458.5,631.3 460.5,631.1 462.5,630.3 464.5,631.1 466.5,631.3 468.5,631.5 470.5,630.9 472.5,631.6 474.5,631.4 476.5,630.9 478.5,630.5 480.5,632.0 482.5,630.6 484.5,630.5 486.5,631.2 488.5,631.1 490.5,631.9 492.5,631.4 494.5,631.4 496.5,630.6 498.5,631.3 500.5,631.3 502.5,630.6 504.5,631.4 506.5,631.5 508.5,630.7 510.5,631.1 512.5,631.5 514.5,630.9 516.5,631.2 518.5,630.5 520.5,631.6 522.5,631.1 524.5,630.5 526.5,631.9 528.5,630.6 530.5,630.8 532.5,630.6 534.5,631.3 536.5,630.9 538.5,630.7 540.5,632.1 542.5,630.8 544.5,630.8 546.5,630.6 548.5,631.3 550.5,630.9 552.5,631.4 554.5,630.9 556.5,631.4 558.5,631.6 560.5,631.1 562.5,631.3 564.5,631.8 566.5,630.2 568.5,631.7 570.5,630.9 572.5,631.5 574.5,630.7 576.5,630.7 578.5,630.6 580.5,631.9 582.5,631.2 584.5,631.1 586.5,631.2 588.5,631.5 590.5,630.9 592.5,632.2 594.5,631.0 596.5,631.8 598.5,630.9 600.5,631.1 602.5,631.1 604.5,630.3 606.5,630.9 608.5,631.1 610.5,630.3 612.5,631.3 614.5,631.1 616.5,630.2 618.5,630.8 620.5,630.7 622.5,631.0 624.5,631.0 626.5,631.2 628.5,630.2 630.5,629.9 632.5,630.6 634.5,631.5 636.5,630.4 638.5,630.2 640.5,630.1 642.5,630.7 644.5,630.8 646.5,630.2 648.5,631.0 650.5,630.2 652.5,631.8 654.5,630.5 656.5,631.1 658.5,630.6 660.5,629.7 662.5,630.8 664.5,630.5 666.5,631.2 668.5,631.2 670.5,631.7 672.5,631.4 674.5,630.5 676.5,631.1 678.5,632.0 680.5,630.5 682.5,630.0 684.5,631.8 686.5,631.3 688.5,630.8 690.5,631.8 692.5,630.2 694.5,631.2 696.5,630.7 698.5,631.0 700.5,631.0 702.5,631.7 704.5,630.2 706.5,630.5 708.5,630.8 710.5,631.0 712.5,630.6 714.5,631.4 716.5,631.4 718.5,631.1 720.5,630.7 722.5,631.0 724.5,631.0 726.5,630.4 728.5,630.8 730.5,630.6 732.5,630.4 734.5,630.8 736.5,631.3 738.5,630.4 740.5,632.0 742.5,630.0 744.5,631.3 746.5,630.8 748.5,630.6 750.5,630.4 752.5,630.1 754.5,631.1 756.5,631.4 758.5,631.6 760.5,630.4 762.5,631.6 764.5,630.8 766.5,630.4 768.5,631.3 770.5,630.8 772.5,631.2 774.5,631.2 776.5,632.0 778.5,630.3 780.5,631.3 782.5,630.1 784.5,630.5 786.5,630.5 788.5,631.4 790.5,632.0 792.5,630.8 794.5,630.3 796.5,630.8 798.5,631.1 800.5,631.7 802.5,632.0 804.5,631.9 806.5,630.7 808.5,630.9 810.5,630.7 812.5,630.8 814.5,630.5 816.5,631.4 818.5,631.0 820.5,631.3 822.5,631.0 824.5,630.7 826.5,631.0 828.5,631.1 830.5,631.5 832.5,630.8 834.5,631.0 836.5,630.9 838.5,630.6 840.5,631.8 842.5,631.2 844.5,630.3 846.5,630.8 848.5,630.7 850.5,631.6 852.5,630.6 854.5,630.4 856.5,631.2 858.5,630.9 860.5,630.9 862.5,630.9 864.5,630.6 866.5,630.6 868.5,631.5 870.5,631.4 872.5,631.2 874.5,631.5 876.5,630.6 878.5,630.1 880.5,631.6 882.5,631.9 884.5,631.2 886.5,631.1 888.5,630.4 890.5,631.7 892.5,631.2 894.5,631.0 896.5,630.9 898.5,630.1 900.5,630.3 902.5,630.7 904.5,631.1 906.5,631.7 908.5,631.0 910.5,631.0 912.5,630.5 914.5,630.0 916.5,630.7 918.5,631.2 920.5,632.3 922.5,631.1 924.5,630.9 926.5,630.5 928.5,630.1 930.5,630.4 932.5,630.5 934.5,630.1 936.5,629.1 938.5,627.4 940.5,625.8 942.5,621.3 944.5,619.7 946.5,623.6 948.5,626.4 950.5,628.5 952.5,629.4 954.5,629.5 956.5,629.0 958.5,628.0 960.5,629.2 962.5,629.2 964.5,629.9 966.5,630.3 968.5,628.1 970.5,629.9 972.5,628.9 974.5,628.8 976.5,629.3 978.5,628.4 980.5,628.7 982.5,628.1 984.5,629.2 986.5,629.9 988.5,628.6 990.5,629.3 992.5,629.7 994.5,629.0 996.5,629.6 998.5,628.4 1000.5,629.3 1002.5,630.1 1004.5,629.0 1006.5,627.4 1008.5,625.8 1010.5,625.5 1012.5,627.2 1014.5,628.9 1016.5,628.3 1018.5,626.2 1020.5,627.6 1022.5,628.4 1024.5,626.3 1026.5,625.0 1028.5,623.3 1030.5,617.1 1032.5,621.0 1034.5,625.8 1036.5,626.9 1038.5,629.0 1040.5,629.3 1042.5,627.3 1044.5,627.5 1046.5,628.3 1048.5,629.1 1050.5,629.3 1052.5,626.9 1054.5,629.9 1056.5,627.2 1058.5,627.5 1060.5,627.6 1062.5,626.7 1064.5,627.9 1066.5,629.0 1068.5,627.7 1070.5,628.7 1072.5,627.8 1074.5,627.8 1076.5,627.7 1078.5,628.8 1080.5,627.1 1082.5,628.6 1084.5,627.2 1086.5,627.7 1088.5,627.9 1090.5,628.0 1092.5,629.2 1094.5,628.9 1096.5,628.9 1098.5,629.7 1100.5,628.2 1102.5,629.7 1104.5,630.1 1106.5,628.6 1108.5,629.3 1110.5,629.4 1112.5,627.9 1114.5,628.5 1116.5,628.6 1118.5,628.7 1120.5,628.1 1122.5,627.6 1124.5,629.6 1126.5,627.4 1128.5,627.6 1130.5,629.8 1132.5,629.9 1134.5,629.5 1136.5,628.8 1138.5,627.4 1140.5,628.4 1142.5,629.3 1144.5,628.3 1146.5,627.7 1148.5,627.6 1150.5,629.9" stroke="#dc1010" stroke-width="0.9" stroke-linejoin="round"/><path d="M0 633.2H114M376 633.2H933" stroke="#d01010" stroke-width="1.2"/>
<polyline points="20.6,630.9 22.5,629.4 28.1,629.4 30.9,631.3 35.6,631.6 45.0,630.9 48.8,629.8 52.5,628.6 60.0,629.4 71.3,629.4 76.9,627.1 82.5,626.9 88.1,628.4 92.8,629.0 95.6,628.4 101.3,624.7 106.9,620.9 112.5,614.8 115.3,618.1 117.2,622.8 120.0,624.1 123.8,621.9 127.5,620.4 131.3,620.4 135.0,621.9 139.7,624.7 143.4,626.6 148.1,625.6 153.8,623.4 159.4,621.5 165.0,620.6 170.6,620.6 175.3,620.0 179.1,617.2 182.8,613.4 187.5,610.6 191.3,607.8 193.1,600.3 195.9,591.9 198.8,591.5 201.6,594.7 204.4,601.3 207.2,604.1 210.9,606.9 215.6,605.0 221.3,605.0 225.0,608.1 232.5,618.0 238.7,622.5 244.9,621.8 252.4,620.0 256.2,608.1 259.9,585.6 263.6,563.2 267.4,552.0 269.4,550.7 272.4,557.0 274.8,560.7 277.3,573.2 279.3,580.6 281.8,570.7 284.8,540.8 288.6,508.4 291.0,490.9 292.3,503.4 293.8,530.8 295.3,553.2 297.3,565.7 299.3,569.4 301.0,560.7 302.8,538.3 304.8,528.3 306.2,527.1 307.7,538.3 309.7,553.2 313.5,568.2 318.5,583.1 323.4,599.3 329.7,604.3 337.1,609.3 343.4,613.0 348.4,616.8 354.6,613.0 360.8,613.5 365.8,611.8 369.5,615.5 370.0,615.3 373.8,619.6 377.5,622.8 381.3,624.7 386.9,625.6 392.5,626.6 398.1,628.4 403.8,629.8 407.5,630.5 426.3,631.1 454.4,631.4 490.0,631.3 493.8,629.8 501.3,627.9 505.0,626.6 510.6,626.6 516.3,626.8 520.0,627.9 527.5,628.6 538.8,628.6 565.0,627.9 572.5,629.0 580.0,629.8 587.5,631.3 606.0,631.4 616.5,629.3 622.8,626.1 629.1,619.8 634.4,609.3 637.6,592.5 640.1,569.4 642.2,542.0 643.9,516.8 645.1,500.0 645.5,471.4 647.2,500.0 649.1,525.2 651.2,554.7 653.3,577.8 656.5,598.8 660.7,613.5 665.9,617.7 671.2,621.5 677.5,621.5 683.8,620.2 690.1,620.9 698.5,623.0 706.9,625.7 715.3,625.1 725.0,626.1 725.6,626.0 731.3,625.6 735.0,623.4 738.8,621.9 742.5,623.4 746.3,625.6 751.9,628.4 759.4,630.9 776.3,631.8 813.8,631.8 851.3,631.8 868.1,629.4 871.9,625.6 875.6,620.0 879.4,618.1 884.1,618.5 888.8,620.4 894.4,622.8 900.0,624.7 903.8,625.6 913.1,627.5 926.3,627.9 935.8,624.9 939.9,611.4 942.6,592.4 946.1,578.9 952.0,577.6 957.4,578.4 959.6,575.7 962.3,581.6 965.5,597.8 969.6,611.4 975.0,616.8 981.8,616.8 988.5,621.6 995.3,622.7 1000.7,620.8 1004.7,611.4 1007.4,592.4 1010.1,568.1 1012.8,546.5 1015.5,519.5 1018.2,489.7 1020.1,470.8 1022.2,420.6 1024.0,436.2 1025.8,460.3 1027.2,476.2 1028.5,503.2 1029.9,535.7 1031.8,562.7 1034.5,576.2 1038.5,584.3 1041.8,586.5 1045.3,578.9 1048.8,562.7 1051.5,543.8 1053.7,521.5 1054.8,516.6 1056.0,523.4 1057.2,519.5 1058.5,500.0 1060.7,490.1 1062.5,475.7 1064.3,472.1 1066.1,481.1 1067.9,475.7 1069.7,468.5 1072.4,479.3 1075.1,489.2 1076.9,475.7 1078.2,463.1 1079.6,454.1 1081.1,436.0 1082.3,418.0 1082.9,384.6 1085.4,418.0 1086.1,445.0 1086.8,472.1 1087.6,493.7 1088.8,515.6 1090.4,533.2 1091.9,546.8 1093.1,542.0 1094.7,536.1 1096.6,540.0 1098.2,531.2 1099.1,523.4 1100.5,533.2 1102.1,531.2 1104.0,529.3 1105.4,519.5 1106.8,507.8 1108.1,482.9 1109.5,463.1 1110.6,446.8 1111.7,441.4 1112.8,454.1 1114.2,464.9 1115.7,471.2 1116.8,459.5 1117.8,436.0 1118.9,422.5 1120.2,427.0 1121.1,439.6 1122.0,463.1 1122.9,486.5 1123.9,500.0 1125.1,515.6 1126.9,529.3 1128.8,536.1 1130.8,533.2 1132.7,539.0 1134.1,542.9 1135.6,535.1 1137.2,523.4 1138.6,520.5 1139.9,527.3 1141.5,542.9 1143.5,554.7 1146.4,566.4 1148.9,574.2 1150.9,579.6" stroke="#f0f020" stroke-width="1.5" stroke-linejoin="round"/>
<polyline points="92.8,629.0 97.5,627.5 102.2,624.7 106.9,620.0 110.6,615.3 112.5,611.6 114.8,615.3 117.2,623.8 120.0,626.6 124.7,625.6 129.4,624.7 134.1,626.6 138.8,628.4 144.4,629.0 150.0,628.4 155.6,627.1 161.3,625.6 166.9,624.7 172.5,624.1 178.1,621.9 182.8,619.1 187.5,616.3 191.3,612.5 195.0,603.1 198.8,598.4 201.6,596.6 204.4,600.3 208.1,602.8 211.9,603.1 215.6,601.3 219.4,598.4 223.1,596.6 225.0,599.3 232.5,610.5 238.7,615.5 244.9,614.3 249.9,610.5 253.7,609.3 257.4,593.1 261.1,565.7 264.9,538.3 267.9,525.3 271.1,533.3 273.6,543.3 276.1,545.8 278.6,560.7 281.1,550.7 284.8,515.8 288.6,481.0 290.5,471.0 291.8,481.0 292.8,503.4 294.3,540.8 296.0,568.2 298.5,575.7 301.0,570.7 303.5,558.2 306.0,555.7 308.5,573.2 311.0,588.1 314.7,598.1 319.7,606.8 324.7,610.5 332.2,609.3 339.6,609.3 347.1,611.8 352.1,606.8 355.8,603.1 362.1,602.6 367.1,599.3 370.0,603.1 373.8,610.6 379.4,617.2 385.0,620.9 390.6,623.8 396.3,626.0 401.9,628.1 407.5,629.4 416.9,629.8 426.3,629.8 435.6,630.5 445.0,630.5 454.4,630.9 467.5,630.9 478.8,630.9 490.0,630.9 497.5,629.8 505.0,627.9 512.5,627.5 520.0,628.4 529.4,628.4 535.0,626.6 540.6,624.7 545.3,622.3 550.0,622.3 554.7,624.7 559.4,626.0 565.0,626.6 570.6,626.8 576.3,627.1 581.9,628.6 585.0,628.7 597.6,631.4 616.5,629.3 627.0,624.0 634.4,613.5 638.6,596.7 641.3,575.7 643.4,552.6 644.9,531.5 646.0,516.8 648.1,533.6 650.2,558.9 652.7,584.1 655.4,600.9 658.6,612.5 662.8,618.8 669.1,620.2 675.4,621.9 681.7,620.2 688.0,619.8 694.3,620.9 702.7,621.9 711.1,623.0 719.5,621.9 725.0,623.0 727.5,622.8 733.1,621.9 738.8,620.4 742.5,621.9 748.1,625.6 755.6,629.0 765.0,631.3 776.3,631.3 795.0,631.3 813.8,631.3 832.5,631.3 851.3,631.3 866.3,630.3 870.0,628.4 873.8,624.7 879.4,622.8 885.0,622.8 890.6,624.7 896.3,625.6 901.9,625.6 907.5,627.1 915.0,627.9 926.3,627.9 931.9,626.9 935.8,622.2 940.7,612.7 945.3,607.3 952.0,607.3 960.1,610.0 968.2,615.4 979.1,617.3 989.9,618.1 998.0,616.8 1003.4,611.4 1007.4,595.1 1010.9,568.1 1013.6,546.5 1016.9,527.6 1020.1,514.1 1022.8,497.8 1025.0,489.7 1027.2,505.9 1029.1,533.0 1030.9,568.1 1033.1,587.0 1036.4,596.5 1040.7,598.4 1043.9,593.8 1047.2,578.9 1050.7,554.6 1054.2,533.0 1058.0,520.0 1059.8,490.1 1061.3,454.1 1062.5,436.0 1063.8,428.8 1066.1,441.4 1068.8,430.6 1071.5,426.1 1074.2,441.4 1076.9,421.6 1078.7,412.6 1080.0,400.0 1080.4,400.0 1081.5,370.0 1082.1,340.0 1082.7,316.4 1083.6,330.0 1084.1,345.0 1084.7,364.0 1085.8,400.0 1086.8,436.0 1089.8,500.0 1091.1,511.7 1092.3,518.5 1094.3,507.8 1096.6,503.9 1098.6,508.8 1100.9,502.0 1102.5,505.9 1104.4,500.0 1105.8,486.5 1107.0,472.1 1108.5,454.1 1109.5,436.0 1110.6,418.9 1112.1,428.8 1113.5,443.2 1115.0,454.1 1116.4,459.5 1117.5,445.0 1118.9,432.4 1120.2,436.0 1121.4,454.1 1124.3,511.7 1125.5,535.1 1126.9,548.8 1128.8,555.6 1131.4,558.6 1133.7,560.5 1135.6,556.6 1137.2,542.9 1138.6,538.1 1139.9,544.9 1141.5,558.6 1143.5,566.4 1146.4,571.2 1148.9,574.2 1150.9,576.1" stroke="#1010e8" stroke-width="1.9" stroke-linejoin="round"/>
<path d="M292.8 284V633.8" stroke="#20a820" stroke-width="1.3"/>
<path d="M294.6 392V633.8" stroke="#48d848" stroke-width="1.1"/>
<path d="M308.5 419V633.8" stroke="#20a820" stroke-width="1.1"/>
<path d="M300.5 489.7V633.8" stroke="#20a820" stroke-width="1.1"/>
<path d="M302.4 505V633.8" stroke="#0c8a0c" stroke-width="1.1"/>
<path d="M293.8 533V633.8" stroke="#b0a0a0" stroke-width="1.3"/>
<path d="M307.2 507V633.8" stroke="#b030c0" stroke-width="1.0"/>
<path d="M198.4 583.4V633.8" stroke="#20a820" stroke-width="1.2"/>
<path d="M202.9 592V633.8" stroke="#0c8a0c" stroke-width="1.2"/>
<path d="M205.7 607.8V633.8" stroke="#20a820" stroke-width="1.0"/>
<path d="M116.3 601.6V633.8" stroke="#b030c0" stroke-width="1.2"/>
<path d="M139 621V633.8" stroke="#d070a0" stroke-width="1.2"/>
<path d="M171.6 620V633.8" stroke="#b030c0" stroke-width="1.0"/>
<path d="M183.2 609V633.8" stroke="#b030c0" stroke-width="1.2"/>
<path d="M379.8 600.3V633.8" stroke="#b030c0" stroke-width="1.2"/>
<path d="M46.3 626V633.8" stroke="#60e0e0" stroke-width="1.0"/>
<path d="M192.6 622V633.8" stroke="#60e0e0" stroke-width="1.0"/>
<path d="M532.8 624.7V633.8" stroke="#20a820" stroke-width="1"/>
<path d="M534.5 626V633.8" stroke="#20a820" stroke-width="1"/>
<path d="M541 622V633.8" stroke="#20a820" stroke-width="1.2"/>
<path d="M545.9 618V633.8" stroke="#20a820" stroke-width="1.2"/>
<path d="M548 621V633.8" stroke="#3080c0" stroke-width="1"/>
<path d="M550.4 623V633.8" stroke="#20a820" stroke-width="1"/>
<path d="M646.4 429.4V633.8" stroke="#20a820" stroke-width="1.1"/>
<path d="M641.3 534.7V633.8" stroke="#20a820" stroke-width="1.0"/>
<path d="M643.9 565V633.8" stroke="#0c8a0c" stroke-width="0.9"/>
<path d="M635.5 595.6V633.8" stroke="#20a820" stroke-width="1"/>
<path d="M649.1 563V633.8" stroke="#20a820" stroke-width="1"/>
<path d="M652.3 580V633.8" stroke="#20a820" stroke-width="1"/>
<path d="M655.4 596.7V633.8" stroke="#20a820" stroke-width="1"/>
<path d="M630.8 617.7V633.8" stroke="#20a820" stroke-width="1"/>
<path d="M625 620.9V633.8" stroke="#20a820" stroke-width="1"/>
<path d="M622.8 622V633.8" stroke="#20a820" stroke-width="1"/>
<path d="M666.6 620.9V633.8" stroke="#b030c0" stroke-width="1"/>
<path d="M715.3 624V633.8" stroke="#b030c0" stroke-width="1"/>
<path d="M722.8 625V633.8" stroke="#b030c0" stroke-width="1"/>
<path d="M873.8 622V633.8" stroke="#20a820" stroke-width="1"/>
<path d="M877.5 609V633.8" stroke="#20a820" stroke-width="1.1"/>
<path d="M880.3 611V633.8" stroke="#20a820" stroke-width="1.1"/>
<path d="M882.4 613V633.8" stroke="#20a820" stroke-width="1"/>
<path d="M889.3 616V633.8" stroke="#20a820" stroke-width="1.1"/>
<path d="M891.6 621V633.8" stroke="#20a820" stroke-width="1"/>
<path d="M819.4 628V633.8" stroke="#e0d040" stroke-width="1"/>
<path d="M943.6 476.8V633.8" stroke="#b030c0" stroke-width="1.3"/>
<path d="M947.2 572V633.8" stroke="#b030c0" stroke-width="1.1"/>
<path d="M956.9 592.4V633.8" stroke="#20a820" stroke-width="1.1"/>
<path d="M960.1 597.8V633.8" stroke="#c8b0b0" stroke-width="1.0"/>
<path d="M957.6 592V633.8" stroke="#0c8a0c" stroke-width="1"/>
<path d="M966.1 615.4V633.8" stroke="#20a820" stroke-width="1"/>
<path d="M968.2 619.5V633.8" stroke="#20a820" stroke-width="1"/>
<path d="M1003.4 592.4V633.8" stroke="#20a820" stroke-width="1"/>
<path d="M1008.8 485.7V633.8" stroke="#20a820" stroke-width="1.2"/>
<path d="M1011.4 444.7V633.8" stroke="#20a820" stroke-width="1.2"/>
<path d="M1020.6 427V633.8" stroke="#20a820" stroke-width="1.2"/>
<path d="M1021.9 427V633.8" stroke="#48d848" stroke-width="1.2"/>
<path d="M1023.2 440V633.8" stroke="#20a820" stroke-width="1.2"/>
<path d="M1029 511V633.8" stroke="#c07080" stroke-width="1.2"/>
<path d="M1045.5 558.6V633.8" stroke="#20a820" stroke-width="1.0"/>
<path d="M1047.5 576V633.8" stroke="#20a820" stroke-width="1"/>
<path d="M1052.5 531V633.8" stroke="#20a820" stroke-width="1.0"/>
<path d="M1054.5 520V633.8" stroke="#48d848" stroke-width="1.1"/>
<path d="M1056.5 530V633.8" stroke="#20a820" stroke-width="1.0"/>
<path d="M1058.5 497V633.8" stroke="#20a820" stroke-width="1.0"/>
<path d="M1060.5 455V633.8" stroke="#48d848" stroke-width="1.0"/>
<path d="M1062.5 443V633.8" stroke="#0c8a0c" stroke-width="1.1"/>
<path d="M1064.5 463V633.8" stroke="#20a820" stroke-width="1.0"/>
<path d="M1066.5 500.5V633.8" stroke="#20a820" stroke-width="1.0"/>
<path d="M1122.6 189.5V633.8" stroke="#b030c0" stroke-width="1.3"/>
<polyline points="1086.1,445.0 1086.8,472.1 1087.6,493.7 1088.8,515.6 1090.4,533.2 1091.9,546.8" stroke="#f0f020" stroke-width="1.5" stroke-linejoin="round"/>
<path d="M1086.3 400V492" stroke="#e6cccc" stroke-width="1.1"/>
<path d="M259.9 404.7C259.1 406.6 256.2 412.6 254.9 416.0C253.6 419.3 252.5 423.2 251.9 424.7C251.3 426.1 252.3 420.9 251.2 424.7C250.0 428.4 246.4 439.6 244.9 447.1C243.5 454.6 242.9 463.9 242.4 469.5C242.0 475.2 242.4 475.3 242.4 481.0C242.4 486.6 242.2 493.8 242.4 503.4C242.7 512.9 242.4 527.9 243.7 538.3C244.9 548.7 247.2 557.4 249.9 565.7C252.6 574.0 255.7 582.1 259.9 588.1C264.0 594.1 269.9 598.6 274.8 601.8C279.8 605.1 284.8 606.6 289.8 607.6C294.8 608.5 299.8 608.3 304.8 607.6C309.7 606.8 314.7 605.1 319.7 603.1C324.7 601.1 329.7 598.3 334.7 595.6C339.6 592.9 345.2 589.8 349.6 586.9C354.0 584.0 358.1 580.6 360.8 578.1C363.5 575.7 364.9 576.1 365.8 571.9C366.8 567.8 366.5 562.6 366.6 553.2C366.6 543.9 366.3 526.2 366.1 515.8C365.8 505.5 365.6 500.3 365.1 490.9C364.5 481.5 363.3 467.3 362.6 459.6C361.9 451.8 362.2 451.7 360.8 444.6C359.5 437.5 357.3 426.7 354.6 417.2C351.9 407.6 348.4 396.4 344.6 387.3C340.9 378.2 336.3 369.6 332.2 362.4C328.0 355.1 323.2 347.9 319.7 343.7C316.2 339.4 313.2 338.5 311.0 336.9C308.8 335.4 308.2 334.4 306.5 334.5C304.8 334.5 303.4 335.7 301.0 337.4C298.6 339.2 295.8 340.8 292.3 344.9C288.8 349.1 284.4 355.7 279.8 362.4C275.3 369.0 268.8 378.2 264.9 384.8C260.9 391.4 258.1 396.8 256.2 402.2C254.2 407.6 253.7 413.5 252.9 417.2C252.1 420.9 251.5 423.4 251.2 424.7" stroke="#e41414" stroke-width="1.5" stroke-linecap="round"/>
<path d="M629.6 410.5C629.3 410.7 628.2 410.9 628.1 412.0C628.0 413.0 628.9 415.1 628.7 416.8C628.5 418.5 627.6 418.7 627.0 422.0C626.5 425.4 625.9 431.5 625.4 436.8C624.8 442.0 624.7 448.3 623.9 453.6C623.1 458.8 622.0 463.4 620.7 468.3C619.5 473.2 618.3 477.7 616.5 483.0C614.8 488.3 612.0 495.1 610.2 500.0C608.5 504.9 607.0 507.4 606.0 512.6C605.0 517.9 604.5 525.2 604.3 531.5C604.2 537.8 604.3 544.8 605.0 550.5C605.6 556.1 607.2 560.3 608.1 565.2C609.0 570.1 609.4 575.3 610.2 579.9C611.1 584.4 612.0 589.2 613.4 592.5C614.8 595.8 616.4 598.2 618.6 599.9C620.9 601.5 623.9 602.1 627.0 602.6C630.2 603.0 634.1 602.2 637.6 602.6C641.1 603.0 644.6 604.2 648.1 605.1C651.6 606.1 655.1 607.6 658.6 608.3C662.1 609.0 665.9 609.3 669.1 609.3C672.2 609.3 674.7 609.1 677.5 608.3C680.3 607.4 683.1 605.8 685.9 604.1C688.7 602.3 691.9 600.4 694.3 597.8C696.8 595.1 698.9 592.0 700.6 588.3C702.4 584.6 703.8 580.6 704.8 575.7C705.8 570.8 706.2 564.5 706.5 558.9C706.8 553.3 706.7 547.6 706.5 542.0C706.3 536.4 705.9 530.5 705.2 525.2C704.6 520.0 703.8 515.1 702.7 510.5C701.6 505.9 700.1 502.3 698.5 497.7C696.9 493.1 695.0 487.9 693.3 483.0C691.5 478.1 689.6 473.2 688.0 468.3C686.4 463.4 685.0 458.8 683.8 453.6C682.6 448.3 682.0 442.4 680.6 436.8C679.2 431.2 677.3 424.8 675.4 419.9C673.5 415.0 671.2 410.8 669.1 407.3C667.0 403.8 664.7 401.3 662.8 398.9C660.9 396.5 659.6 394.0 657.5 393.0C655.4 392.1 652.6 392.7 650.2 393.0C647.7 393.4 645.3 393.8 642.8 395.1C640.4 396.5 637.7 398.5 635.5 401.0C633.2 403.6 630.5 408.9 629.6 410.5" stroke="#e41414" stroke-width="1.5" stroke-linecap="round"/>
<path d="M627.0 602.6C628.4 602.4 633.3 601.7 635.5 601.7C637.6 601.7 639.3 602.4 640.1 602.6" stroke="#e41414" stroke-width="1.5" stroke-linecap="round"/>
<polyline points="1042.8,316.0 1050.8,307.6 1051.4,301.0" stroke="#e41414" stroke-width="1.5" stroke-linecap="round" stroke-linejoin="round"/>
<path d="M1050.5 311.0C1049.8 312.2 1048.0 316.0 1046.6 318.4C1045.1 320.8 1043.4 323.2 1041.8 325.6C1040.2 328.0 1038.6 329.7 1037.0 332.9C1035.4 336.1 1033.3 340.9 1032.2 344.9C1031.1 348.9 1030.8 351.8 1030.6 357.0C1030.4 362.2 1030.7 366.8 1031.0 376.0C1031.3 385.2 1031.9 400.0 1032.5 412.0C1033.1 424.0 1033.8 435.3 1034.6 448.0C1035.4 460.7 1036.2 478.6 1037.1 488.3C1038.0 497.9 1038.9 501.3 1040.0 505.9C1041.1 510.4 1042.3 512.0 1043.9 515.6C1045.5 519.2 1047.5 523.7 1049.8 527.3C1052.0 530.9 1054.6 534.3 1057.6 537.1C1060.5 539.9 1063.7 542.3 1067.3 543.9C1070.9 545.5 1075.1 546.1 1079.0 546.8C1082.9 547.6 1086.8 548.0 1090.8 548.4C1094.7 548.8 1098.6 549.1 1102.5 549.2C1106.4 549.3 1111.0 549.2 1114.2 549.2C1117.4 549.1 1117.7 549.3 1121.6 548.9C1125.6 548.6 1133.3 547.9 1137.8 547.0C1142.3 546.1 1145.7 545.2 1148.6 543.5C1151.6 541.8 1153.9 539.2 1155.4 536.8C1156.9 534.3 1157.3 532.3 1157.8 528.6C1158.3 525.0 1158.4 519.6 1158.4 515.1C1158.4 510.6 1158.1 506.1 1157.8 501.6C1157.6 497.1 1156.8 493.1 1156.8 488.1C1156.7 483.2 1156.8 477.3 1157.3 471.9C1157.8 466.5 1159.1 461.1 1160.0 455.7C1160.9 450.3 1161.8 444.2 1162.7 439.5C1163.6 434.7 1165.2 432.7 1165.7 427.3C1166.2 421.9 1165.7 414.0 1165.7 407.0C1165.7 400.0 1165.7 391.6 1165.7 385.4C1165.6 379.3 1165.8 374.7 1165.3 370.1C1164.7 365.6 1163.8 362.1 1162.3 358.1C1160.8 354.1 1158.8 350.4 1156.2 346.1C1153.7 341.8 1150.7 337.1 1147.2 332.6C1143.7 328.1 1139.2 323.1 1135.2 319.1C1131.2 315.1 1127.2 311.8 1123.2 308.5C1119.2 305.3 1114.2 302.2 1111.2 299.5C1108.1 296.9 1107.1 294.5 1105.0 292.6C1102.9 290.7 1100.4 289.6 1098.3 288.4C1096.2 287.2 1094.5 286.1 1092.3 285.6C1090.1 285.1 1087.8 285.0 1085.0 285.4C1082.2 285.8 1078.5 286.9 1075.5 287.8C1072.5 288.7 1069.4 289.5 1067.0 290.8C1064.6 292.1 1062.8 293.8 1061.0 295.6C1059.2 297.4 1057.9 299.5 1056.2 301.6C1054.5 303.7 1051.7 307.1 1050.8 308.2" stroke="#e41414" stroke-width="1.5" stroke-linecap="round"/>
</svg>
<div id="ind"><span class="r" style="left:-2.5px"><span class="cw"><span class="cj">提前抄底</span></span></span><span class="r" style="left:48.2px"><span class="cw">VOLUME: 102698896.000</span><span class="cr"><svg class="ar" viewBox="0 0 6 11" stroke="currentColor" fill="none" stroke-width="1" aria-label="up"><path d="M3.3 0.5V10.5M1.3 3.5L3.3 0.5L5.3 3.5"/></svg></span><span class="cw">,</span></span><span class="r" style="left:185.0px"><span class="cr"><span class="cj">主力启动线</span>: 98950600.000</span><span class="cg"><svg class="ar" viewBox="0 0 6 11" stroke="currentColor" fill="none" stroke-width="1" aria-label="down"><path d="M3.3 0.5V10.5M1.3 7.5L3.3 10.5L5.3 7.5"/></svg></span><span class="cr">,</span></span><span class="r" style="left:339.0px"><span class="cy"><span class="cj">主力洗盘线</span>: 1870969216.000</span><span class="cg"><svg class="ar" viewBox="0 0 6 11" stroke="currentColor" fill="none" stroke-width="1" aria-label="down"><path d="M3.3 0.5V10.5M1.3 7.5L3.3 10.5L5.3 7.5"/></svg></span><span class="cy">,</span></span><span class="r" style="left:505.2px"><span class="cb"><span class="cj">资金异动线</span>: 1991458432.000</span><span class="cg"><svg class="ar" viewBox="0 0 6 11" stroke="currentColor" fill="none" stroke-width="1" aria-label="down"><path d="M3.3 0.5V10.5M1.3 7.5L3.3 10.5L5.3 7.5"/></svg></span><span class="cb">,</span></span><span class="r" style="left:671.5px"><span class="cy"><span class="cj">出击</span>:</span></span><span class="r" style="left:706.2px"><span class="cg"><span class="cj">启动</span>:</span></span><span class="r" style="left:741.0px"><span class="cr">OK:</span></span></div>
<div id="axis"><span class="m" style="left:-1.3px;border-left-color:transparent;">2019/05</span><span class="t" style="left:6.3px"></span><span class="t" style="left:14.0px"></span><span class="t" style="left:21.6px"></span><span class="t" style="left:29.2px"></span><span class="t" style="left:36.9px"></span><span class="m" style="left:44.5px;">09</span><span class="t" style="left:51.9px"></span><span class="t" style="left:59.3px"></span><span class="t" style="left:66.8px"></span><span class="t" style="left:74.2px"></span><span class="t" style="left:81.6px"></span><span class="m" style="left:89.0px;">12</span><span class="t" style="left:96.2px"></span><span class="t" style="left:103.5px"></span><span class="t" style="left:110.8px"></span><span class="t" style="left:118.0px"></span><span class="t" style="left:125.2px"></span><span class="m" style="left:132.5px;">2020/03</span><span class="t" style="left:139.8px"></span><span class="t" style="left:147.0px"></span><span class="t" style="left:154.2px"></span><span class="t" style="left:161.5px"></span><span class="t" style="left:168.8px"></span><span class="m" style="left:176.0px;">06</span><span class="t" style="left:183.7px"></span><span class="t" style="left:191.3px"></span><span class="t" style="left:199.0px"></span><span class="t" style="left:206.7px"></span><span class="t" style="left:214.3px"></span><span class="m" style="left:222.0px;">09</span><span class="t" style="left:229.2px"></span><span class="t" style="left:236.3px"></span><span class="t" style="left:243.5px"></span><span class="t" style="left:250.7px"></span><span class="t" style="left:257.8px"></span><span class="m" style="left:265.0px;">12</span><span class="t" style="left:272.4px"></span><span class="t" style="left:279.8px"></span><span class="t" style="left:287.2px"></span><span class="t" style="left:294.7px"></span><span class="t" style="left:302.1px"></span><span class="m" style="left:309.5px;">2021/03</span><span class="t" style="left:316.9px"></span><span class="t" style="left:324.3px"></span><span class="t" style="left:331.8px"></span><span class="t" style="left:339.2px"></span><span class="t" style="left:346.6px"></span><span class="m" style="left:354.0px;">06</span><span class="t" style="left:361.5px"></span><span class="t" style="left:369.0px"></span><span class="t" style="left:376.5px"></span><span class="t" style="left:384.0px"></span><span class="t" style="left:391.5px"></span><span class="m" style="left:399.0px;">09</span><span class="t" style="left:406.2px"></span><span class="t" style="left:413.5px"></span><span class="t" style="left:420.8px"></span><span class="t" style="left:428.0px"></span><span class="t" style="left:435.2px"></span><span class="m" style="left:442.5px;">12</span><span class="t" style="left:449.8px"></span><span class="t" style="left:457.0px"></span><span class="t" style="left:464.2px"></span><span class="t" style="left:471.5px"></span><span class="t" style="left:478.8px"></span><span class="m" style="left:486.0px;">2022/03</span><span class="t" style="left:493.2px"></span><span class="t" style="left:500.5px"></span><span class="t" style="left:507.8px"></span><span class="t" style="left:515.0px"></span><span class="t" style="left:522.2px"></span><span class="m" style="left:529.5px;">06</span><span class="t" style="left:537.1px"></span><span class="t" style="left:544.7px"></span><span class="t" style="left:552.2px"></span><span class="t" style="left:559.8px"></span><span class="t" style="left:567.4px"></span><span class="m" style="left:575.0px;">09</span><span class="t" style="left:582.5px"></span><span class="t" style="left:590.0px"></span><span class="t" style="left:597.5px"></span><span class="t" style="left:605.0px"></span><span class="t" style="left:612.5px"></span><span class="m" style="left:620.0px;">12</span><span class="t" style="left:627.1px"></span><span class="t" style="left:634.2px"></span><span class="t" style="left:641.2px"></span><span class="t" style="left:648.3px"></span><span class="t" style="left:655.4px"></span><span class="m" style="left:662.5px;">2023/03</span><span class="t" style="left:669.8px"></span><span class="t" style="left:677.0px"></span><span class="t" style="left:684.2px"></span><span class="t" style="left:691.5px"></span><span class="t" style="left:698.8px"></span><span class="m" style="left:706.0px;">06</span><span class="t" style="left:713.5px"></span><span class="t" style="left:721.0px"></span><span class="t" style="left:728.5px"></span><span class="t" style="left:736.0px"></span><span class="t" style="left:743.5px"></span><span class="m" style="left:751.0px;">09</span><span class="t" style="left:758.4px"></span><span class="t" style="left:765.8px"></span><span class="t" style="left:773.2px"></span><span class="t" style="left:780.7px"></span><span class="t" style="left:788.1px"></span><span class="m" style="left:795.5px;">12</span><span class="t" style="left:802.8px"></span><span class="t" style="left:810.0px"></span><span class="t" style="left:817.2px"></span><span class="t" style="left:824.5px"></span><span class="t" style="left:831.8px"></span><span class="m" style="left:839.0px;">2024/03</span><span class="t" style="left:846.2px"></span><span class="t" style="left:853.5px"></span><span class="t" style="left:860.8px"></span><span class="t" style="left:868.0px"></span><span class="t" style="left:875.2px"></span><span class="m" style="left:882.5px;">06</span><span class="t" style="left:890.0px"></span><span class="t" style="left:897.5px"></span><span class="t" style="left:905.0px"></span><span class="t" style="left:912.5px"></span><span class="t" style="left:920.0px"></span><span class="m" style="left:927.5px;">09</span><span class="t" style="left:934.8px"></span><span class="t" style="left:942.0px"></span><span class="t" style="left:949.2px"></span><span class="t" style="left:956.5px"></span><span class="t" style="left:963.8px"></span><span class="m" style="left:971.0px;">12</span><span class="t" style="left:978.2px"></span><span class="t" style="left:985.3px"></span><span class="t" style="left:992.5px"></span><span class="t" style="left:999.7px"></span><span class="t" style="left:1006.8px"></span><span class="m" style="left:1014.0px;">2025/03</span><span class="t" style="left:1021.0px"></span><span class="t" style="left:1028.0px"></span><span class="t" style="left:1035.0px"></span><span class="t" style="left:1042.0px"></span><span class="t" style="left:1049.0px"></span><span class="m" style="left:1056.0px;">06</span><span class="t" style="left:1063.5px"></span><span class="t" style="left:1071.0px"></span><span class="t" style="left:1078.5px"></span><span class="t" style="left:1086.0px"></span><span class="t" style="left:1093.5px"></span><span class="m" style="left:1101.0px;">09</span><span class="t" style="left:1108.5px"></span><span class="t" style="left:1116.0px"></span><span class="t" style="left:1123.5px"></span><span class="t" style="left:1131.0px"></span><span class="t" style="left:1138.5px"></span><span class="m" style="left:1146.0px;">12</span><span class="t" style="left:1153.3px"></span><span class="t" style="left:1160.7px"></span><span class="t" style="left:1168.0px"></span><span class="t" style="left:1175.3px"></span><span class="t" style="left:1182.7px"></span></div>
<div id="tabs"><span class="tb first" style="left:-3px;width:12px"><span class="cj">取</span></span><span class="tb" style="left:9.0px;width:58.5px">0<i></i></span><span class="tb" style="left:67.5px;width:58.5px">00<i></i></span><span class="tb" style="left:126.0px;width:58.5px">000<i></i></span><span class="tb" style="left:184.5px;width:58.5px">1<i></i></span><span class="tb" style="left:243.0px;width:58.5px">111<i></i></span><span class="tb" style="left:301.5px;width:58.5px">1<span class="cj">最爱</span><i></i></span><span class="tb" style="left:360.0px;width:58.5px">A<i></i></span><span class="tb" style="left:418.5px;width:58.5px">A00<i></i></span><span class="tb" style="left:477.0px;width:58.5px">A000<i></i></span><span class="tb" style="left:535.5px;width:58.5px">A011<i></i></span><span class="tb" style="left:594.0px;width:58.5px">A1<i></i></span><span class="tb" style="left:652.5px;width:58.5px">AA<span class="cj">指标</span><i></i></span><span class="tb" style="left:711.0px;width:58.5px">AA<span class="cj">指数</span><i></i></span><span class="tb" style="left:769.5px;width:58.5px">A<span class="cj">爱大盘</span><i></i></span><span class="tb" style="left:828.0px;width:58.5px">A<span class="cj">三宝</span><i></i></span><span class="tb" style="left:886.5px;width:58.5px"><span class="cj">爱巴</span><i></i></span><span class="tb" style="left:945.0px;width:58.5px"><span class="cj">爱财</span><i></i></span><span class="tb" style="left:1003.5px;width:58.5px"><span class="cj">爱大盘</span><i></i></span><span class="tb" style="left:1062.0px;width:58.5px"><span class="cj">爱底</span><i></i></span><span class="tb" style="left:1120.5px;width:31.5px"><span class="cj">其他</span></span></div>
</body></html>
